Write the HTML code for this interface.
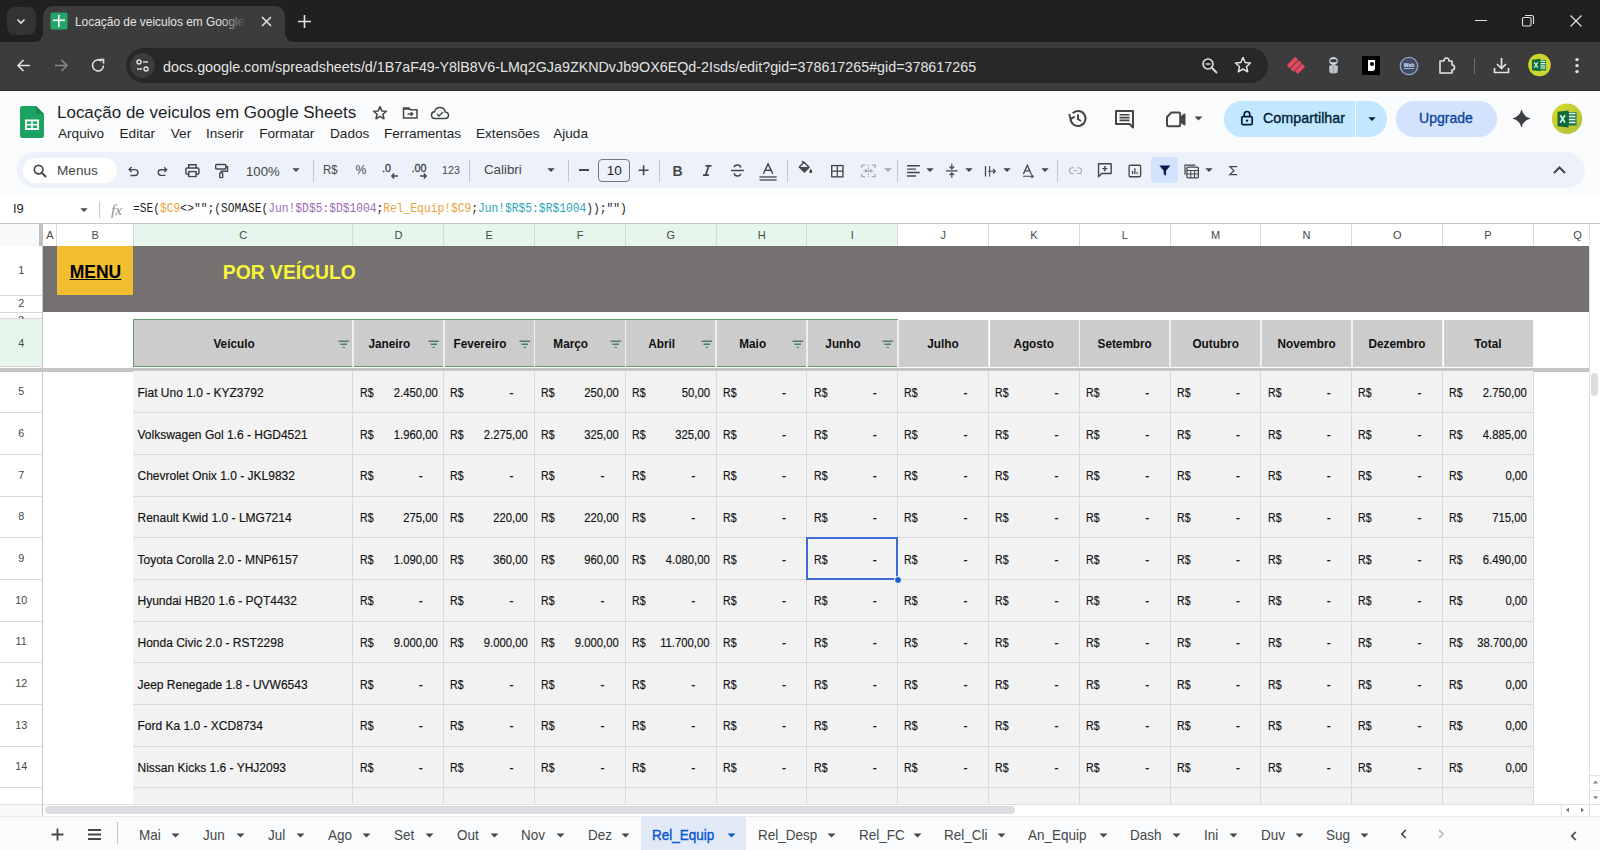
<!DOCTYPE html><html><head><meta charset="utf-8"><style>
html,body{margin:0;padding:0;width:1600px;height:850px;overflow:hidden;background:#fff;position:relative}
.r{position:absolute;box-sizing:border-box}
.t{position:absolute;white-space:nowrap;line-height:normal}
</style></head><body>
<div class="r" style="left:0px;top:0px;width:1600px;height:42px;background:#202020;"></div>
<div class="r" style="left:0px;top:42px;width:1600px;height:48px;background:#3c3c3c;"></div>
<div class="r" style="left:7px;top:7px;width:29px;height:28px;background:#333333;border-radius:8px"></div>
<svg class="r" style="left:14px;top:14px;" width="14" height="14" viewBox="0 0 14 14"><path d="M3.5 5.5 L7 9 L10.5 5.5" stroke="#e3e3e3" stroke-width="1.6" fill="none"/></svg>
<div class="r" style="left:43px;top:6px;width:242px;height:37px;background:#3c3c3c;border-radius:10px 10px 0 0"></div>
<svg class="r" style="left:33px;top:32px;" width="10" height="10" viewBox="0 0 10 10"><path d="M0 10 Q10 10 10 0 L10 10 Z" fill="#3c3c3c"/></svg>
<svg class="r" style="left:285px;top:32px;" width="10" height="10" viewBox="0 0 10 10"><path d="M10 10 Q0 10 0 0 L0 10 Z" fill="#3c3c3c"/></svg>
<svg class="r" style="left:50px;top:12px;" width="18" height="18" viewBox="0 0 18 18"><rect x="0.5" y="0.5" width="17" height="17" rx="2" fill="#23a566"/><rect x="8" y="3" width="1.6" height="12" fill="#fff"/><rect x="3" y="7.5" width="12" height="1.6" fill="#fff"/></svg>
<div class="r" style="left:75px;top:8px;width:175px;height:30px;overflow:hidden">
<div class="t" style="left:0px;top:6.42px;font-family:'Liberation Sans';font-size:12.8px;color:#e3e3e3;font-weight:normal;transform:scaleX(0.93);transform-origin:left 0;">Locação de veiculos em Google</div>
</div>
<div class="r" style="left:220px;top:8px;width:30px;height:30px;background:linear-gradient(to right, rgba(60,60,60,0), #3c3c3c 90%);"></div>
<svg class="r" style="left:260px;top:15px;" width="13" height="13" viewBox="0 0 13 13"><path d="M2 2 L11 11 M11 2 L2 11" stroke="#e3e3e3" stroke-width="1.5"/></svg>
<svg class="r" style="left:297px;top:14px;" width="15" height="15" viewBox="0 0 15 15"><path d="M7.5 1 V14 M1 7.5 H14" stroke="#e3e3e3" stroke-width="1.6"/></svg>
<div class="r" style="left:1475px;top:20px;width:12px;height:1px;background:#e3e3e3;"></div>
<svg class="r" style="left:1521px;top:14px;" width="14" height="14" viewBox="0 0 14 14"><rect x="1.5" y="3.5" width="8.5" height="8.5" rx="1.5" stroke="#e3e3e3" stroke-width="1.1" fill="none"/><path d="M4 1.5 H10.5 Q12.5 1.5 12.5 3.5 V10" stroke="#e3e3e3" stroke-width="1.1" fill="none"/></svg>
<svg class="r" style="left:1569px;top:14px;" width="14" height="14" viewBox="0 0 14 14"><path d="M1.5 1.5 L12.5 12.5 M12.5 1.5 L1.5 12.5" stroke="#e3e3e3" stroke-width="1.2"/></svg>
<svg class="r" style="left:15px;top:57px;" width="17" height="17" viewBox="0 0 17 17"><path d="M15 8.5 H3 M8.5 3 L3 8.5 L8.5 14" stroke="#e3e3e3" stroke-width="1.6" fill="none"/></svg>
<svg class="r" style="left:53px;top:57px;" width="17" height="17" viewBox="0 0 17 17"><path d="M2 8.5 H14 M8.5 3 L14 8.5 L8.5 14" stroke="#8a8a8a" stroke-width="1.6" fill="none"/></svg>
<svg class="r" style="left:90px;top:57px;" width="17" height="17" viewBox="0 0 17 17"><path d="M13.5 8.5 A5.5 5.5 0 1 1 11.5 4.2" stroke="#e3e3e3" stroke-width="1.6" fill="none"/><path d="M9.5 2.5 L13.5 2.5 L13.5 6.5" stroke="#e3e3e3" stroke-width="1.6" fill="none"/></svg>
<div class="r" style="left:126px;top:48px;width:1142px;height:35px;background:#282828;border-radius:18px"></div>
<div class="r" style="left:130px;top:53px;width:25px;height:25px;background:#3c3c3c;border-radius:50%"></div>
<svg class="r" style="left:135px;top:58px;" width="15" height="15" viewBox="0 0 15 15"><circle cx="4" cy="4" r="2" stroke="#e3e3e3" stroke-width="1.4" fill="none"/><path d="M8 4 H13" stroke="#e3e3e3" stroke-width="1.4"/><circle cx="11" cy="11" r="2" stroke="#e3e3e3" stroke-width="1.4" fill="none"/><path d="M2 11 H7" stroke="#e3e3e3" stroke-width="1.4"/></svg>
<div class="t" style="left:163px;top:59.06px;font-family:'Liberation Sans';font-size:14.3px;color:#e3e3e3;font-weight:normal;">docs.google.com/spreadsheets/d/1B7aF49-Y8lB8V6-LMq2GJa9ZKNDvJb9OX6EQd-2Isds/edit?gid=378617265#gid=378617265</div>
<svg class="r" style="left:1201px;top:57px;" width="18" height="18" viewBox="0 0 18 18"><circle cx="7" cy="7" r="5" stroke="#e3e3e3" stroke-width="1.6" fill="none"/><path d="M11 11 L16 16" stroke="#e3e3e3" stroke-width="1.8"/><path d="M4.5 7 H9.5" stroke="#e3e3e3" stroke-width="1.4"/></svg>
<svg class="r" style="left:1234px;top:56px;" width="18" height="18" viewBox="0 0 18 18"><path d="M9 1.5 L11.2 6.5 L16.5 7 L12.5 10.5 L13.7 15.8 L9 13 L4.3 15.8 L5.5 10.5 L1.5 7 L6.8 6.5 Z" stroke="#e3e3e3" stroke-width="1.5" fill="none" stroke-linejoin="round"/></svg>
<svg class="r" style="left:1284px;top:54px;" width="24" height="24" viewBox="0 0 24 24"><g transform="rotate(-45 12 12)" fill="#e24a5e"><rect x="6" y="5" width="12" height="4.2" rx="0.8"/><rect x="6" y="9.9" width="12" height="4.2" rx="0.8"/><rect x="7.5" y="14.8" width="10.5" height="4.2" rx="0.8"/></g></svg>
<svg class="r" style="left:1326px;top:56px;" width="15" height="19" viewBox="0 0 15 19"><ellipse cx="7.5" cy="5" rx="4.3" ry="4" fill="#d2d6da"/><rect x="4.3" y="3.3" width="6.4" height="3" rx="1.5" fill="#2c3a4a"/><path d="M3 10 Q7.5 8 12 10 L11.5 16.5 Q7.5 18.5 3.5 16.5 Z" fill="#bfc4c9"/><path d="M7.5 10 V17" stroke="#8f959b" stroke-width="0.8"/></svg>
<div class="r" style="left:1362px;top:56px;width:18px;height:19px;background:#000;"></div>
<svg class="r" style="left:1364px;top:58px;" width="14" height="15" viewBox="0 0 14 15"><path d="M4 2 H11 V10 Q11 13 8 13 H4 Z" fill="#fff"/><circle cx="8" cy="6" r="2" fill="#000"/></svg>
<svg class="r" style="left:1399px;top:56px;" width="20" height="20" viewBox="0 0 20 20"><circle cx="10" cy="10" r="8.7" fill="#3f4c6b" stroke="#9aa6bd" stroke-width="1.3"/><text x="10" y="10.5" font-size="5" text-anchor="middle" font-family="Liberation Sans" font-weight="bold" fill="#e8ecf5">Web</text><path d="M5 12.5 H15" stroke="#c9d1e0" stroke-width="0.8"/></svg>
<svg class="r" style="left:1437px;top:56px;" width="19" height="19" viewBox="0 0 19 19"><path d="M3 5 H7 Q7 2 9.5 2 Q12 2 12 5 H15 V9 Q17.5 9 17.5 11.5 Q17.5 14 15 14 V17 H3 Z" stroke="#e3e3e3" stroke-width="1.6" fill="none" stroke-linejoin="round"/></svg>
<div class="r" style="left:1474px;top:58px;width:1px;height:16px;background:#6b6b6b;"></div>
<svg class="r" style="left:1492px;top:56px;" width="19" height="19" viewBox="0 0 19 19"><path d="M9.5 2 V12 M5 8 L9.5 12.5 L14 8" stroke="#e3e3e3" stroke-width="1.7" fill="none"/><path d="M2.5 12 V16.5 H16.5 V12" stroke="#e3e3e3" stroke-width="1.7" fill="none"/></svg>
<svg class="r" style="left:1527px;top:53px;" width="25" height="24" viewBox="0 0 25 24"><circle cx="12.5" cy="12" r="11.3" fill="#cdd52e"/><rect x="12.5" y="7" width="6.5" height="10.5" fill="#1d7a45"/><path d="M13.3 8.3 H18.3 M13.3 10.6 H18.3 M13.3 12.9 H18.3 M13.3 15.2 H18.3" stroke="#e6f3ea" stroke-width="1.2"/><path d="M5 6.8 L13.3 5.7 V18.3 L5 17.2 Z" fill="#0e6b3b"/><path d="M7.2 9.4 L10.8 14.6 M10.8 9.4 L7.2 14.6" stroke="#d9f0e1" stroke-width="1.3"/></svg>
<svg class="r" style="left:1571px;top:55px;" width="12" height="22" viewBox="0 0 12 22"><circle cx="6" cy="4.6" r="1.7" fill="#e3e3e3"/><circle cx="6" cy="10.6" r="1.7" fill="#e3e3e3"/><circle cx="6" cy="16.6" r="1.7" fill="#e3e3e3"/></svg>
<div class="r" style="left:0px;top:90px;width:1600px;height:133px;background:#f9fbfd;"></div>
<div class="r" style="left:0px;top:89.5px;width:1600px;height:1px;background:#2c2c2c;"></div>
<div class="r" style="left:0px;top:90.5px;width:1600px;height:1px;background:#ffffff;"></div>
<svg class="r" style="left:20px;top:106px;" width="24" height="32" viewBox="0 0 24 32"><path d="M2.5 0 H16 L24 8 V29.5 Q24 32 21.5 32 H2.5 Q0 32 0 29.5 V2.5 Q0 0 2.5 0 Z" fill="#1ea362"/><path d="M16 0 L24 8 H18 Q16 8 16 6 Z" fill="#188a52"/><rect x="5" y="13.5" width="14" height="10.5" fill="#fff"/><rect x="6.8" y="15.3" width="4.4" height="2.6" fill="#1ea362"/><rect x="12.8" y="15.3" width="4.4" height="2.6" fill="#1ea362"/><rect x="6.8" y="19.5" width="4.4" height="2.6" fill="#1ea362"/><rect x="12.8" y="19.5" width="4.4" height="2.6" fill="#1ea362"/></svg>
<div class="t" style="left:56.5px;top:103.01px;font-family:'Liberation Sans';font-size:16.9px;color:#1f1f1f;font-weight:normal;transform:scaleX(1.005);transform-origin:left 0;">Locação de veiculos em Google Sheets</div>
<svg class="r" style="left:371px;top:103.5px;" width="18" height="18" viewBox="0 0 18 18"><path d="M9 2.6 L10.8 6.9 L15.4 7.3 L11.9 10.3 L13 14.8 L9 12.4 L5 14.8 L6.1 10.3 L2.6 7.3 L7.2 6.9 Z" stroke="#444746" stroke-width="1.5" fill="none" stroke-linejoin="round"/></svg>
<svg class="r" style="left:401px;top:104px;" width="18" height="18" viewBox="0 0 18 18"><path d="M2.5 4 V14 H16 V5.8 H9.5 L8 4 Z" stroke="#444746" stroke-width="1.5" fill="none" stroke-linejoin="round"/><path d="M2.5 4 H8 L9.5 5.8 H2.5 Z" fill="#444746"/><path d="M6.5 10 H11.5 M9.8 8.2 L11.6 10 L9.8 11.8" stroke="#444746" stroke-width="1.5" fill="none"/></svg>
<svg class="r" style="left:430px;top:104px;" width="20" height="18" viewBox="0 0 20 18"><path d="M5 14.5 Q1.5 14.5 1.5 11 Q1.5 8 4.5 7.8 Q5.5 3.5 10 3.5 Q14.5 3.5 15.3 8 Q18.5 8.3 18.5 11.3 Q18.5 14.5 15 14.5 Z" stroke="#444746" stroke-width="1.5" fill="none"/><path d="M7 10 L9 12 L13 8" stroke="#444746" stroke-width="1.4" fill="none"/></svg>
<div class="t" style="left:58px;top:126.19px;font-family:'Liberation Sans';font-size:13.6px;color:#1f1f1f;font-weight:normal;">Arquivo</div>
<div class="t" style="left:119.5px;top:126.19px;font-family:'Liberation Sans';font-size:13.6px;color:#1f1f1f;font-weight:normal;">Editar</div>
<div class="t" style="left:170.8px;top:126.19px;font-family:'Liberation Sans';font-size:13.6px;color:#1f1f1f;font-weight:normal;">Ver</div>
<div class="t" style="left:206px;top:126.19px;font-family:'Liberation Sans';font-size:13.6px;color:#1f1f1f;font-weight:normal;">Inserir</div>
<div class="t" style="left:259.2px;top:126.19px;font-family:'Liberation Sans';font-size:13.6px;color:#1f1f1f;font-weight:normal;">Formatar</div>
<div class="t" style="left:330px;top:126.19px;font-family:'Liberation Sans';font-size:13.6px;color:#1f1f1f;font-weight:normal;">Dados</div>
<div class="t" style="left:384px;top:126.19px;font-family:'Liberation Sans';font-size:13.6px;color:#1f1f1f;font-weight:normal;">Ferramentas</div>
<div class="t" style="left:476px;top:126.19px;font-family:'Liberation Sans';font-size:13.6px;color:#1f1f1f;font-weight:normal;">Extensões</div>
<div class="t" style="left:553.2px;top:126.19px;font-family:'Liberation Sans';font-size:13.6px;color:#1f1f1f;font-weight:normal;">Ajuda</div>
<svg class="r" style="left:1066px;top:107px;" width="23" height="23" viewBox="0 0 23 23"><path d="M4.5 11.5 A7.5 7.5 0 1 0 6.7 6.2" stroke="#444746" stroke-width="2" fill="none"/><path d="M2.5 5.5 L4.5 11.5 L9.5 9" stroke="#444746" stroke-width="0" fill="none"/><path d="M3.2 7 L4.6 11.8 L8.8 9.6" stroke="#444746" stroke-width="1.9" fill="none" stroke-linejoin="round"/><path d="M12 7.5 V12 L15 14" stroke="#444746" stroke-width="2" fill="none"/></svg>
<svg class="r" style="left:1113px;top:108px;" width="23" height="23" viewBox="0 0 23 23"><path d="M3 3 H20 V19.5 L16.5 16 H3 Z" stroke="#444746" stroke-width="2" fill="none" stroke-linejoin="round"/><path d="M6.5 6.8 H16.5 M6.5 9.6 H16.5 M6.5 12.4 H16.5" stroke="#444746" stroke-width="1.6"/></svg>
<svg class="r" style="left:1164px;top:109px;" width="24" height="20" viewBox="0 0 24 20"><path d="M3 8 L7.5 3.5 H15 Q16.2 3.5 16.2 4.7 V16.2 Q16.2 17.2 15 17.2 H4.2 Q3 17.2 3 16 Z" stroke="#444746" stroke-width="2" fill="none" stroke-linejoin="round"/><path d="M16.2 9 L20.5 5.5 V15.5 L16.2 12" stroke="#444746" stroke-width="2" fill="#444746" stroke-linejoin="round"/></svg>
<svg class="r" style="left:1194px;top:116px;" width="9" height="6" viewBox="0 0 9 6"><path d="M0.5 0.5 H8.5 L4.5 4.5 Z" fill="#444746"/></svg>
<div class="r" style="left:1223.5px;top:100.5px;width:163.5px;height:36.5px;background:#c2e7ff;border-radius:18px"></div>
<div class="r" style="left:1355px;top:100.5px;width:1px;height:36.5px;background:#f9fbfd;"></div>
<svg class="r" style="left:1240px;top:110px;" width="14" height="16" viewBox="0 0 14 16"><rect x="1.8" y="6.6" width="10.4" height="8" rx="1.2" stroke="#001d35" stroke-width="1.7" fill="none"/><path d="M4.2 6.6 V4.5 Q4.2 1.5 7 1.5 Q9.8 1.5 9.8 4.5 V6.6" stroke="#001d35" stroke-width="1.7" fill="none"/><circle cx="7" cy="10.6" r="1.2" fill="#001d35"/></svg>
<div class="t" style="left:1263px;top:110.35px;font-family:'Liberation Sans';font-size:14.2px;color:#001d35;font-weight:normal;transform:scaleX(1.01);transform-origin:left 0;-webkit-text-stroke:0.35px #001d35">Compartilhar</div>
<svg class="r" style="left:1367.5px;top:117px;" width="8" height="5" viewBox="0 0 8 5"><path d="M0.3 0.3 H7.7 L4 4 Z" fill="#001d35"/></svg>
<div class="r" style="left:1395.5px;top:100.5px;width:101.5px;height:36.5px;background:#d3e3fd;border-radius:18px"></div>
<div class="t" style="left:1419px;top:110.35px;font-family:'Liberation Sans';font-size:14.2px;color:#0842a0;font-weight:normal;transform:scaleX(0.99);transform-origin:left 0;-webkit-text-stroke:0.3px #0842a0">Upgrade</div>
<svg class="r" style="left:1511px;top:108px;" width="21" height="21" viewBox="0 0 21 21"><path d="M10.5 1.3 Q12.2 8.8 19.7 10.5 Q12.2 12.2 10.5 19.7 Q8.8 12.2 1.3 10.5 Q8.8 8.8 10.5 1.3 Z" fill="#3c3f43"/></svg>
<svg class="r" style="left:1551px;top:103px;" width="32" height="32" viewBox="0 0 32 32"><defs><linearGradient id="yg" x1="0" y1="0" x2="1" y2="1"><stop offset="0" stop-color="#d8dc2a"/><stop offset="1" stop-color="#aebc3a"/></linearGradient></defs><circle cx="16" cy="15.75" r="15.2" fill="url(#yg)"/><rect x="17" y="9" width="8.5" height="13.6" fill="#1d7a45"/><path d="M18 10.5 H24.5 M18 13.5 H24.5 M18 16.5 H24.5 M18 19.5 H24.5" stroke="#e6f3ea" stroke-width="1.7"/><path d="M6.5 8.8 L17.5 7.4 V24.6 L6.5 23.2 Z" fill="#0e6b3b"/><path d="M9.3 12.2 L14 19.6 M14 12.2 L9.3 19.6" stroke="#d9f0e1" stroke-width="1.7"/></svg>
<div class="r" style="left:16.5px;top:152px;width:1568.5px;height:36px;background:#edf2fa;border-radius:18px"></div>
<div class="r" style="left:23px;top:157.5px;width:94px;height:25.5px;background:#ffffff;border-radius:13px"></div>
<svg class="r" style="left:32px;top:163px;" width="16" height="16" viewBox="0 0 16 16"><circle cx="6.6" cy="6.6" r="4.3" stroke="#444746" stroke-width="1.7" fill="none"/><path d="M9.7 9.7 L14 14" stroke="#444746" stroke-width="1.9"/></svg>
<div class="t" style="left:57px;top:163.19px;font-family:'Liberation Sans';font-size:13.6px;color:#444746;font-weight:normal;">Menus</div>
<svg class="r" style="left:125px;top:163px;transform:translate(-0.20px,-0.22px) scale(0.838);" width="17" height="17" viewBox="0 0 17 17"><path d="M4 6.5 H10.5 Q14 6.5 14 10 Q14 13.5 10.5 13.5 H5" stroke="#444746" stroke-width="1.7" fill="none"/><path d="M6.5 3.5 L3.5 6.5 L6.5 9.5" stroke="#444746" stroke-width="1.7" fill="none"/></svg>
<svg class="r" style="left:154px;top:163px;transform:translate(0.15px,-0.20px) scale(0.804);" width="17" height="17" viewBox="0 0 17 17"><path d="M13 6.5 H6.5 Q3 6.5 3 10 Q3 13.5 6.5 13.5 H12" stroke="#444746" stroke-width="1.7" fill="none"/><path d="M10.5 3.5 L13.5 6.5 L10.5 9.5" stroke="#444746" stroke-width="1.7" fill="none"/></svg>
<svg class="r" style="left:184px;top:163px;transform:translate(-0.12px,-0.75px) scale(0.910);" width="17" height="16" viewBox="0 0 17 16"><path d="M4.5 5.5 V2 H12.5 V5.5" stroke="#444746" stroke-width="1.6" fill="none"/><rect x="1.3" y="5.5" width="14.4" height="6.8" rx="1.6" stroke="#444746" stroke-width="1.6" fill="none"/><rect x="4.5" y="9.5" width="8" height="5.5" stroke="#444746" stroke-width="1.6" fill="#edf2fa"/></svg>
<svg class="r" style="left:213px;top:162px;transform:translate(-0.38px,-0.72px) scale(0.847);" width="18" height="19" viewBox="0 0 18 19"><rect x="2" y="2" width="12" height="5.5" rx="1" stroke="#444746" stroke-width="1.7" fill="none"/><path d="M14 4.8 H16 V10 H8.5 V12" stroke="#444746" stroke-width="1.6" fill="none"/><rect x="6.8" y="12" width="3.5" height="5.5" rx="0.5" stroke="#444746" stroke-width="1.6" fill="none"/></svg>
<div class="t" style="left:246px;top:164.19px;font-family:'Liberation Sans';font-size:13.6px;color:#444746;font-weight:normal;transform:scaleX(0.97);transform-origin:left 0;">100%</div>
<svg class="r" style="left:292px;top:168px;" width="8" height="5" viewBox="0 0 8 5"><path d="M0.3 0.3 H7.7 L4 4 Z" fill="#444746"/></svg>
<div class="r" style="left:313px;top:160px;width:1px;height:22px;background:#c7c7c7;"></div>
<div class="t" style="left:323px;top:162.76px;font-family:'Liberation Sans';font-size:12.2px;color:#444746;font-weight:normal;transform:scaleX(0.93);transform-origin:left 0;">R$</div>
<div class="t" style="left:355.5px;top:162.76px;font-family:'Liberation Sans';font-size:12.2px;color:#444746;font-weight:normal;">%</div>
<div class="t" style="left:382px;top:162.03px;font-family:'Liberation Sans';font-size:10.8px;color:#444746;font-weight:normal;transform:scaleX(1.0);transform-origin:left 0;-webkit-text-stroke:0.35px #444746">.0</div>
<svg class="r" style="left:390px;top:172px;" width="9" height="8" viewBox="0 0 9 8"><path d="M8 4 H1.8 M4.2 1.6 L1.8 4 L4.2 6.4" stroke="#444746" stroke-width="1.4" fill="none"/></svg>
<div class="t" style="left:411.5px;top:162.03px;font-family:'Liberation Sans';font-size:10.8px;color:#444746;font-weight:normal;transform:scaleX(1.0);transform-origin:left 0;-webkit-text-stroke:0.35px #444746">.00</div>
<svg class="r" style="left:419px;top:171.5px;" width="9" height="8" viewBox="0 0 9 8"><path d="M1 4 H7.2 M4.8 1.6 L7.2 4 L4.8 6.4" stroke="#444746" stroke-width="1.4" fill="none"/></svg>
<div class="t" style="left:442.3px;top:163.59px;font-family:'Liberation Sans';font-size:11.5px;color:#444746;font-weight:normal;transform:scaleX(0.93);transform-origin:left 0;">123</div>
<div class="r" style="left:469px;top:160px;width:1px;height:22px;background:#c7c7c7;"></div>
<div class="t" style="left:484.3px;top:161.89px;font-family:'Liberation Sans';font-size:13.6px;color:#444746;font-weight:normal;transform:scaleX(0.98);transform-origin:left 0;">Calibri</div>
<svg class="r" style="left:547px;top:168px;" width="8" height="5" viewBox="0 0 8 5"><path d="M0.3 0.3 H7.7 L4 4 Z" fill="#444746"/></svg>
<div class="r" style="left:568px;top:160px;width:1px;height:22px;background:#c7c7c7;"></div>
<div class="r" style="left:579px;top:169.3px;width:9.6px;height:1.6px;background:#444746;"></div>
<div class="r" style="left:598.3px;top:159.2px;width:31.5px;height:22.4px;background:transparent;border:1px solid #747775;border-radius:4px"></div>
<div class="t" style="left:614.3px;width:0;display:flex;justify-content:center;top:162.89px;"><span style="white-space:nowrap;font-family:'Liberation Sans';font-size:13.6px;color:#1f1f1f;font-weight:normal;display:inline-block">10</span></div>
<svg class="r" style="left:636px;top:163px;transform:translate(0.10px,-0.30px) scale(0.909);" width="15" height="15" viewBox="0 0 15 15"><path d="M7.5 2 V13 M2 7.5 H13" stroke="#444746" stroke-width="1.8"/></svg>
<div class="r" style="left:659px;top:160px;width:1px;height:22px;background:#c7c7c7;"></div>
<div class="t" style="left:672.5px;top:163.33px;font-family:'Liberation Sans';font-size:14px;color:#444746;font-weight:bold;">B</div>
<svg class="r" style="left:699px;top:163px;transform:translate(0.20px,-0.50px) scale(0.843);" width="16" height="16" viewBox="0 0 16 16"><path d="M6 2.5 H13 M3 13.5 H10 M9.8 2.5 L6.2 13.5" stroke="#444746" stroke-width="2" fill="none"/></svg>
<svg class="r" style="left:728px;top:162px;transform:translate(0.45px,-0.50px) scale(0.911);" width="18" height="18" viewBox="0 0 18 18"><path d="M2 9 H16" stroke="#444746" stroke-width="1.6"/><path d="M12.5 6 Q12.5 3 9 3 Q5.5 3 5.5 5.5" stroke="#444746" stroke-width="1.6" fill="none"/><path d="M5.5 12 Q5.5 15 9 15 Q12.5 15 12.5 12.5" stroke="#444746" stroke-width="1.6" fill="none"/></svg>
<svg class="r" style="left:756px;top:159px;transform:translate(1.08px,1.03px) scale(0.859);" width="22" height="24" viewBox="0 0 22 24"><path d="M5.5 14 L11 2.5 L16.5 14 M7.5 10 H14.5" stroke="#444746" stroke-width="1.7" fill="none"/><rect x="1" y="17" width="20" height="1.5" fill="#444746"/><rect x="1" y="20.5" width="20" height="1.5" fill="#444746"/></svg>
<div class="r" style="left:787px;top:160px;width:1px;height:22px;background:#c7c7c7;"></div>
<svg class="r" style="left:796px;top:161px;transform:translate(-0.23px,-2.30px) scale(0.852);" width="19" height="19" viewBox="0 0 19 19"><path d="M2.5 8 L8 2.5 L14 8.5 L8.5 14 Z" stroke="#444746" stroke-width="1.7" fill="none" stroke-linejoin="round"/><path d="M2.5 8.2 H13.8 L8.5 14 Z" fill="#444746"/><path d="M5.5 1 L8 3.5" stroke="#444746" stroke-width="1.7"/><path d="M16 10 Q17.8 12.5 17.8 13.5 A1.8 1.8 0 0 1 14.2 13.5 Q14.2 12.5 16 10 Z" fill="#444746"/></svg>
<svg class="r" style="left:828px;top:162px;transform:translate(-0.17px,-0.30px) scale(0.751);" width="19" height="19" viewBox="0 0 19 19"><rect x="2" y="2" width="15" height="15" stroke="#444746" stroke-width="1.8" fill="none"/><path d="M9.5 2 V17 M2 9.5 H17" stroke="#444746" stroke-width="1.6"/></svg>
<svg class="r" style="left:858px;top:162px;transform:translate(0.40px,-0.65px) scale(0.826);" width="20" height="19" viewBox="0 0 20 19"><path d="M2 2.5 V6 M2 13 V16.5 H6 M6 2.5 H2 M14 2.5 H18 V6 M18 13 V16.5 H14" stroke="#a8abad" stroke-width="1.6" fill="none"/><path d="M4 9.5 H8.5 M6.5 7.5 L8.5 9.5 L6.5 11.5 M16 9.5 H11.5 M13.5 7.5 L11.5 9.5 L13.5 11.5" stroke="#a8abad" stroke-width="1.5" fill="none"/><path d="M10 2 V17" stroke="#a8abad" stroke-width="1.4" stroke-dasharray="2 1.5"/></svg>
<svg class="r" style="left:884px;top:168px;" width="8" height="5" viewBox="0 0 8 5"><path d="M0.3 0.3 H7.7 L4 4 Z" fill="#a8abad"/></svg>
<div class="r" style="left:897px;top:160px;width:1px;height:22px;background:#c7c7c7;"></div>
<svg class="r" style="left:904px;top:162px;transform:translate(0.45px,0.25px) scale(0.848);" width="18" height="18" viewBox="0 0 18 18"><path d="M1.5 2.5 H16.5 M1.5 6.5 H12 M1.5 10.5 H16.5 M1.5 14.5 H12" stroke="#444746" stroke-width="1.7"/></svg>
<svg class="r" style="left:926px;top:168px;" width="8" height="5" viewBox="0 0 8 5"><path d="M0.3 0.3 H7.7 L4 4 Z" fill="#444746"/></svg>
<svg class="r" style="left:943px;top:161px;transform:translate(-0.20px,-0.18px) scale(0.775);" width="18" height="20" viewBox="0 0 18 20"><path d="M1.5 10 H16.5" stroke="#444746" stroke-width="1.7"/><path d="M9 1 V7.5 M6 4.5 L9 7.5 L12 4.5 M9 19 V12.5 M6 15.5 L9 12.5 L12 15.5" stroke="#444746" stroke-width="1.6" fill="none"/></svg>
<svg class="r" style="left:965px;top:168px;" width="8" height="5" viewBox="0 0 8 5"><path d="M0.3 0.3 H7.7 L4 4 Z" fill="#444746"/></svg>
<svg class="r" style="left:981px;top:162px;transform:translate(0.75px,0.25px) scale(0.750);" width="18" height="18" viewBox="0 0 18 18"><path d="M2 2 V16" stroke="#444746" stroke-width="1.7"/><path d="M7.5 2 V16" stroke="#444746" stroke-width="1.5"/><path d="M5.5 9 H15 M12 6 L15 9 L12 12" stroke="#444746" stroke-width="1.6" fill="none"/></svg>
<svg class="r" style="left:1003px;top:168px;" width="8" height="5" viewBox="0 0 8 5"><path d="M0.3 0.3 H7.7 L4 4 Z" fill="#444746"/></svg>
<svg class="r" style="left:1019px;top:161px;transform:translate(0.39px,0.31px) scale(0.780);" width="19" height="19" viewBox="0 0 19 19"><path d="M2.5 13.5 L7.5 2.5 L12.5 13.5 M4.3 9.5 H10.7" stroke="#444746" stroke-width="1.7" fill="none"/><path d="M2 16.5 H15 M12.5 14 L15 16.5 L12.5 19" stroke="#444746" stroke-width="1.5" fill="none"/></svg>
<svg class="r" style="left:1041px;top:168px;" width="8" height="5" viewBox="0 0 8 5"><path d="M0.3 0.3 H7.7 L4 4 Z" fill="#444746"/></svg>
<div class="r" style="left:1057px;top:160px;width:1px;height:22px;background:#c7c7c7;"></div>
<svg class="r" style="left:1064px;top:163px;transform:translate(0.95px,0.20px) scale(0.640);" width="21" height="15" viewBox="0 0 21 15"><path d="M8 3 H5.5 A4.5 4.5 0 0 0 5.5 12 H8 M13 3 H15.5 A4.5 4.5 0 0 1 15.5 12 H13 M7 7.5 H14" stroke="#a8abad" stroke-width="1.7" fill="none"/></svg>
<svg class="r" style="left:1095px;top:161px;transform:translate(-0.15px,-0.99px) scale(0.788);" width="20" height="20" viewBox="0 0 20 20"><path d="M2 2 H18 V14.5 H6 L2 18.5 Z" stroke="#444746" stroke-width="1.8" fill="none" stroke-linejoin="round"/><path d="M10 5 V11.5 M6.8 8.2 H13.2" stroke="#444746" stroke-width="1.8"/></svg>
<svg class="r" style="left:1125px;top:162px;transform:translate(0.35px,-0.50px) scale(0.768);" width="19" height="19" viewBox="0 0 19 19"><rect x="2" y="2" width="15" height="15" rx="1.5" stroke="#444746" stroke-width="1.7" fill="none"/><path d="M6.5 9.5 V13.5 M9.5 6 V13.5 M12.5 11 V13.5" stroke="#444746" stroke-width="1.7"/></svg>
<div class="r" style="left:1151px;top:157px;width:27px;height:26px;background:#d3e3fd;border-radius:4px"></div>
<svg class="r" style="left:1156px;top:163px;transform:translate(0.35px,-0.35px) scale(0.792);" width="17" height="16" viewBox="0 0 17 16"><path d="M1.5 1.5 H15.5 L10 8 V14.5 L7 12.5 V8 Z" fill="#041e49"/></svg>
<svg class="r" style="left:1181px;top:161px;transform:translate(0.26px,-0.20px) scale(0.764);" width="22" height="21" viewBox="0 0 22 21"><rect x="4" y="5" width="15" height="14" rx="1.5" stroke="#444746" stroke-width="1.7" fill="none"/><path d="M1.5 15 V2.5 H15" stroke="#444746" stroke-width="1.6" fill="none"/><path d="M4 9.5 H19 M4 14 H19 M9 9.5 V19 M14 9.5 V19" stroke="#444746" stroke-width="1.4"/></svg>
<svg class="r" style="left:1205px;top:168px;" width="8" height="5" viewBox="0 0 8 5"><path d="M0.3 0.3 H7.7 L4 4 Z" fill="#444746"/></svg>
<svg class="r" style="left:1225px;top:163px;transform:translate(1.03px,-0.35px) scale(0.727);" width="15" height="16" viewBox="0 0 15 16"><path d="M12.5 2.5 H2.5 L8 8 L2.5 13.5 H12.5" stroke="#444746" stroke-width="1.8" fill="none"/></svg>
<svg class="r" style="left:1552px;top:165px;" width="15" height="10" viewBox="0 0 15 10"><path d="M2 8 L7.5 2.5 L13 8" stroke="#444746" stroke-width="2" fill="none"/></svg>
<div class="r" style="left:0px;top:196px;width:1600px;height:27px;background:#ffffff;"></div>
<div class="t" style="left:13px;top:201.24px;font-family:'Liberation Sans';font-size:13px;color:#1f1f1f;font-weight:normal;">I9</div>
<svg class="r" style="left:80px;top:208px;" width="8" height="5" viewBox="0 0 8 5"><path d="M0.3 0.3 H7.7 L4 4 Z" fill="#444746"/></svg>
<div class="r" style="left:99px;top:202px;width:1px;height:16px;background:#c7c7c7;"></div>
<div class="t" style="left:111px;top:200.69px;font-family:'Liberation Serif';font-size:15.5px;color:#8c8f92;font-weight:normal;transform:scaleX(1.0);transform-origin:left 0;"><i>fx</i></div>
<div class="t" style="left:132.8px;top:202.20px;font-family:'Liberation Mono';font-size:12.6px;color:#1f1f1f;font-weight:normal;transform:scaleX(0.895);transform-origin:left 0;"><span style="color:#1f1f1f">=SE(</span><span style="color:#e9a23b">$C9</span><span style="color:#1f1f1f">&lt;&gt;"";(SOMASE(</span><span style="color:#9a6ab5">Jun!$D$5:$D$1004</span><span style="color:#1f1f1f">;</span><span style="color:#e9a23b">Rel_Equip!$C9</span><span style="color:#1f1f1f">;</span><span style="color:#2aa5b9">Jun!$R$5:$R$1004</span><span style="color:#1f1f1f">));"")</span></div>
<div class="r" style="left:0px;top:223px;width:1600px;height:1px;background:#c7c7c7;"></div>
<div class="r" style="left:0px;top:224px;width:39px;height:22px;background:#f8f9fa;"></div>
<div class="r" style="left:39px;top:224px;width:4px;height:22px;background:#c0c0c0;"></div>
<div class="r" style="left:43px;top:224px;width:14px;height:22px;background:#ffffff;"></div>
<div class="r" style="left:57px;top:224px;width:76.19999999999999px;height:22px;background:#ffffff;"></div>
<div class="r" style="left:133.2px;top:224px;width:219.8px;height:22px;background:#e6f6ec;"></div>
<div class="r" style="left:353.0px;top:224px;width:90.80000000000001px;height:22px;background:#e6f6ec;"></div>
<div class="r" style="left:443.8px;top:224px;width:90.80000000000001px;height:22px;background:#e6f6ec;"></div>
<div class="r" style="left:534.6px;top:224px;width:90.79999999999995px;height:22px;background:#e6f6ec;"></div>
<div class="r" style="left:625.4px;top:224px;width:90.79999999999995px;height:22px;background:#e6f6ec;"></div>
<div class="r" style="left:716.2px;top:224px;width:90.79999999999995px;height:22px;background:#e6f6ec;"></div>
<div class="r" style="left:807.0px;top:224px;width:90.79999999999995px;height:22px;background:#e6f6ec;"></div>
<div class="r" style="left:897.8px;top:224px;width:90.79999999999995px;height:22px;background:#ffffff;"></div>
<div class="r" style="left:988.6px;top:224px;width:90.80000000000007px;height:22px;background:#ffffff;"></div>
<div class="r" style="left:1079.4px;top:224px;width:90.79999999999995px;height:22px;background:#ffffff;"></div>
<div class="r" style="left:1170.1999999999998px;top:224px;width:90.79999999999995px;height:22px;background:#ffffff;"></div>
<div class="r" style="left:1261.0px;top:224px;width:90.79999999999995px;height:22px;background:#ffffff;"></div>
<div class="r" style="left:1351.8px;top:224px;width:90.79999999999995px;height:22px;background:#ffffff;"></div>
<div class="r" style="left:1442.6px;top:224px;width:90.79999999999995px;height:22px;background:#ffffff;"></div>
<div class="r" style="left:1533.4px;top:224px;width:56.09999999999991px;height:22px;background:#ffffff;"></div>
<div class="r" style="left:56px;top:224px;width:1px;height:22px;background:#d6d8db;"></div>
<div class="t" style="left:50.0px;width:0;display:flex;justify-content:center;top:228.84px;"><span style="white-space:nowrap;font-family:'Liberation Sans';font-size:11px;color:#444746;font-weight:normal;display:inline-block">A</span></div>
<div class="r" style="left:133px;top:224px;width:1px;height:22px;background:#d6d8db;"></div>
<div class="t" style="left:95.1px;width:0;display:flex;justify-content:center;top:228.84px;"><span style="white-space:nowrap;font-family:'Liberation Sans';font-size:11px;color:#444746;font-weight:normal;display:inline-block">B</span></div>
<div class="r" style="left:352px;top:224px;width:1px;height:22px;background:#d6d8db;"></div>
<div class="t" style="left:243.1px;width:0;display:flex;justify-content:center;top:228.84px;"><span style="white-space:nowrap;font-family:'Liberation Sans';font-size:11px;color:#444746;font-weight:normal;display:inline-block">C</span></div>
<div class="r" style="left:443px;top:224px;width:1px;height:22px;background:#d6d8db;"></div>
<div class="t" style="left:398.4px;width:0;display:flex;justify-content:center;top:228.84px;"><span style="white-space:nowrap;font-family:'Liberation Sans';font-size:11px;color:#444746;font-weight:normal;display:inline-block">D</span></div>
<div class="r" style="left:534px;top:224px;width:1px;height:22px;background:#d6d8db;"></div>
<div class="t" style="left:489.20000000000005px;width:0;display:flex;justify-content:center;top:228.84px;"><span style="white-space:nowrap;font-family:'Liberation Sans';font-size:11px;color:#444746;font-weight:normal;display:inline-block">E</span></div>
<div class="r" style="left:625px;top:224px;width:1px;height:22px;background:#d6d8db;"></div>
<div class="t" style="left:580.0px;width:0;display:flex;justify-content:center;top:228.84px;"><span style="white-space:nowrap;font-family:'Liberation Sans';font-size:11px;color:#444746;font-weight:normal;display:inline-block">F</span></div>
<div class="r" style="left:716px;top:224px;width:1px;height:22px;background:#d6d8db;"></div>
<div class="t" style="left:670.8px;width:0;display:flex;justify-content:center;top:228.84px;"><span style="white-space:nowrap;font-family:'Liberation Sans';font-size:11px;color:#444746;font-weight:normal;display:inline-block">G</span></div>
<div class="r" style="left:806px;top:224px;width:1px;height:22px;background:#d6d8db;"></div>
<div class="t" style="left:761.6px;width:0;display:flex;justify-content:center;top:228.84px;"><span style="white-space:nowrap;font-family:'Liberation Sans';font-size:11px;color:#444746;font-weight:normal;display:inline-block">H</span></div>
<div class="r" style="left:897px;top:224px;width:1px;height:22px;background:#d6d8db;"></div>
<div class="t" style="left:852.4px;width:0;display:flex;justify-content:center;top:228.84px;"><span style="white-space:nowrap;font-family:'Liberation Sans';font-size:11px;color:#444746;font-weight:normal;display:inline-block">I</span></div>
<div class="r" style="left:988px;top:224px;width:1px;height:22px;background:#d6d8db;"></div>
<div class="t" style="left:943.1999999999999px;width:0;display:flex;justify-content:center;top:228.84px;"><span style="white-space:nowrap;font-family:'Liberation Sans';font-size:11px;color:#444746;font-weight:normal;display:inline-block">J</span></div>
<div class="r" style="left:1079px;top:224px;width:1px;height:22px;background:#d6d8db;"></div>
<div class="t" style="left:1034.0px;width:0;display:flex;justify-content:center;top:228.84px;"><span style="white-space:nowrap;font-family:'Liberation Sans';font-size:11px;color:#444746;font-weight:normal;display:inline-block">K</span></div>
<div class="r" style="left:1170px;top:224px;width:1px;height:22px;background:#d6d8db;"></div>
<div class="t" style="left:1124.8000000000002px;width:0;display:flex;justify-content:center;top:228.84px;"><span style="white-space:nowrap;font-family:'Liberation Sans';font-size:11px;color:#444746;font-weight:normal;display:inline-block">L</span></div>
<div class="r" style="left:1260px;top:224px;width:1px;height:22px;background:#d6d8db;"></div>
<div class="t" style="left:1215.6px;width:0;display:flex;justify-content:center;top:228.84px;"><span style="white-space:nowrap;font-family:'Liberation Sans';font-size:11px;color:#444746;font-weight:normal;display:inline-block">M</span></div>
<div class="r" style="left:1351px;top:224px;width:1px;height:22px;background:#d6d8db;"></div>
<div class="t" style="left:1306.4px;width:0;display:flex;justify-content:center;top:228.84px;"><span style="white-space:nowrap;font-family:'Liberation Sans';font-size:11px;color:#444746;font-weight:normal;display:inline-block">N</span></div>
<div class="r" style="left:1442px;top:224px;width:1px;height:22px;background:#d6d8db;"></div>
<div class="t" style="left:1397.1999999999998px;width:0;display:flex;justify-content:center;top:228.84px;"><span style="white-space:nowrap;font-family:'Liberation Sans';font-size:11px;color:#444746;font-weight:normal;display:inline-block">O</span></div>
<div class="r" style="left:1533px;top:224px;width:1px;height:22px;background:#d6d8db;"></div>
<div class="t" style="left:1488.0px;width:0;display:flex;justify-content:center;top:228.84px;"><span style="white-space:nowrap;font-family:'Liberation Sans';font-size:11px;color:#444746;font-weight:normal;display:inline-block">P</span></div>
<div class="r" style="left:1589px;top:224px;width:1px;height:22px;background:#d6d8db;"></div>
<div class="t" style="left:1577.5px;width:0;display:flex;justify-content:center;top:228.84px;"><span style="white-space:nowrap;font-family:'Liberation Sans';font-size:11px;color:#444746;font-weight:normal;display:inline-block">Q</span></div>
<div class="r" style="left:0px;top:246px;width:1589.5px;height:1px;background:#c7c7c7;"></div>
<div class="r" style="left:0px;top:247px;width:43px;height:557px;background:#ffffff;"></div>
<div class="r" style="left:0px;top:246px;width:42px;height:49.5px;background:#ffffff;"></div>
<div class="r" style="left:0px;top:295.5px;width:42px;height:16.5px;background:#ffffff;"></div>
<div class="r" style="left:0px;top:312px;width:42px;height:7px;background:#ffffff;"></div>
<div class="r" style="left:0px;top:319px;width:42px;height:48px;background:#e6f6ec;"></div>
<div class="r" style="left:0px;top:371.0px;width:42px;height:41.670000000000016px;background:#ffffff;"></div>
<div class="r" style="left:0px;top:412.67px;width:42px;height:41.670000000000016px;background:#ffffff;"></div>
<div class="r" style="left:0px;top:454.34000000000003px;width:42px;height:41.670000000000016px;background:#ffffff;"></div>
<div class="r" style="left:0px;top:496.01px;width:42px;height:41.66999999999996px;background:#ffffff;"></div>
<div class="r" style="left:0px;top:537.6800000000001px;width:42px;height:41.66999999999996px;background:#ffffff;"></div>
<div class="r" style="left:0px;top:579.35px;width:42px;height:41.66999999999996px;background:#ffffff;"></div>
<div class="r" style="left:0px;top:621.02px;width:42px;height:41.66999999999996px;background:#ffffff;"></div>
<div class="r" style="left:0px;top:662.69px;width:42px;height:41.66999999999996px;background:#ffffff;"></div>
<div class="r" style="left:0px;top:704.36px;width:42px;height:41.66999999999996px;background:#ffffff;"></div>
<div class="r" style="left:0px;top:746.03px;width:42px;height:41.66999999999996px;background:#ffffff;"></div>
<div class="r" style="left:0px;top:787.7px;width:42px;height:16.299999999999955px;background:#ffffff;"></div>
<div class="r" style="left:0px;top:295px;width:42px;height:1px;background:#d6d8db;"></div>
<div class="t" style="left:21.2px;width:0;display:flex;justify-content:center;top:264.38px;"><span style="white-space:nowrap;font-family:'Liberation Sans';font-size:10.8px;color:#444746;font-weight:normal;display:inline-block">1</span></div>
<div class="r" style="left:0px;top:312px;width:42px;height:1px;background:#d6d8db;"></div>
<div class="t" style="left:21.2px;width:0;display:flex;justify-content:center;top:297.38px;"><span style="white-space:nowrap;font-family:'Liberation Sans';font-size:10.8px;color:#444746;font-weight:normal;display:inline-block">2</span></div>
<div class="r" style="left:0px;top:318px;width:42px;height:1px;background:#d6d8db;"></div>
<div class="r" style="left:0;top:312px;width:42px;height:6.5px;overflow:hidden">
<div class="t" style="left:21px;width:0;display:flex;justify-content:center;top:2.35px;"><span style="white-space:nowrap;font-family:'Liberation Sans';font-size:11px;color:#444746;font-weight:normal;display:inline-block">3</span></div>
</div>
<div class="r" style="left:0px;top:366px;width:42px;height:1px;background:#d6d8db;"></div>
<div class="t" style="left:21.2px;width:0;display:flex;justify-content:center;top:336.63px;"><span style="white-space:nowrap;font-family:'Liberation Sans';font-size:10.8px;color:#444746;font-weight:normal;display:inline-block">4</span></div>
<div class="r" style="left:0px;top:412px;width:42px;height:1px;background:#d6d8db;"></div>
<div class="t" style="left:21.2px;width:0;display:flex;justify-content:center;top:385.46px;"><span style="white-space:nowrap;font-family:'Liberation Sans';font-size:10.8px;color:#444746;font-weight:normal;display:inline-block">5</span></div>
<div class="r" style="left:0px;top:454px;width:42px;height:1px;background:#d6d8db;"></div>
<div class="t" style="left:21.2px;width:0;display:flex;justify-content:center;top:427.13px;"><span style="white-space:nowrap;font-family:'Liberation Sans';font-size:10.8px;color:#444746;font-weight:normal;display:inline-block">6</span></div>
<div class="r" style="left:0px;top:496px;width:42px;height:1px;background:#d6d8db;"></div>
<div class="t" style="left:21.2px;width:0;display:flex;justify-content:center;top:468.80px;"><span style="white-space:nowrap;font-family:'Liberation Sans';font-size:10.8px;color:#444746;font-weight:normal;display:inline-block">7</span></div>
<div class="r" style="left:0px;top:537px;width:42px;height:1px;background:#d6d8db;"></div>
<div class="t" style="left:21.2px;width:0;display:flex;justify-content:center;top:510.47px;"><span style="white-space:nowrap;font-family:'Liberation Sans';font-size:10.8px;color:#444746;font-weight:normal;display:inline-block">8</span></div>
<div class="r" style="left:0px;top:579px;width:42px;height:1px;background:#d6d8db;"></div>
<div class="t" style="left:21.2px;width:0;display:flex;justify-content:center;top:552.14px;"><span style="white-space:nowrap;font-family:'Liberation Sans';font-size:10.8px;color:#444746;font-weight:normal;display:inline-block">9</span></div>
<div class="r" style="left:0px;top:621px;width:42px;height:1px;background:#d6d8db;"></div>
<div class="t" style="left:21.2px;width:0;display:flex;justify-content:center;top:593.81px;"><span style="white-space:nowrap;font-family:'Liberation Sans';font-size:10.8px;color:#444746;font-weight:normal;display:inline-block">10</span></div>
<div class="r" style="left:0px;top:662px;width:42px;height:1px;background:#d6d8db;"></div>
<div class="t" style="left:21.2px;width:0;display:flex;justify-content:center;top:635.48px;"><span style="white-space:nowrap;font-family:'Liberation Sans';font-size:10.8px;color:#444746;font-weight:normal;display:inline-block">11</span></div>
<div class="r" style="left:0px;top:704px;width:42px;height:1px;background:#d6d8db;"></div>
<div class="t" style="left:21.2px;width:0;display:flex;justify-content:center;top:677.15px;"><span style="white-space:nowrap;font-family:'Liberation Sans';font-size:10.8px;color:#444746;font-weight:normal;display:inline-block">12</span></div>
<div class="r" style="left:0px;top:746px;width:42px;height:1px;background:#d6d8db;"></div>
<div class="t" style="left:21.2px;width:0;display:flex;justify-content:center;top:718.82px;"><span style="white-space:nowrap;font-family:'Liberation Sans';font-size:10.8px;color:#444746;font-weight:normal;display:inline-block">13</span></div>
<div class="r" style="left:0px;top:787px;width:42px;height:1px;background:#d6d8db;"></div>
<div class="t" style="left:21.2px;width:0;display:flex;justify-content:center;top:760.49px;"><span style="white-space:nowrap;font-family:'Liberation Sans';font-size:10.8px;color:#444746;font-weight:normal;display:inline-block">14</span></div>
<div class="r" style="left:0px;top:804px;width:42px;height:1px;background:#d6d8db;"></div>
<div class="r" style="left:42px;top:247px;width:1px;height:557px;background:#c7c7c7;"></div>
<div class="r" style="left:43px;top:246px;width:1546.5px;height:66px;background:#767171;"></div>
<div class="r" style="left:57px;top:246px;width:76.2px;height:49px;background:#f1bd31;"></div>
<div class="t" style="left:95.5px;width:0;display:flex;justify-content:center;top:262.16px;"><span style="white-space:nowrap;font-family:'Liberation Sans';font-size:17.5px;color:#000;font-weight:bold;transform:scaleX(1.0);transform-origin:center 0;display:inline-block"><u>MENU</u></span></div>
<div class="t" style="left:289.3px;width:0;display:flex;justify-content:center;top:260.00px;"><span style="white-space:nowrap;font-family:'Liberation Sans';font-size:21px;color:#f7f73b;font-weight:bold;transform:scaleX(0.92);transform-origin:center 0;display:inline-block">POR VEÍCULO</span></div>
<div class="r" style="left:133.2px;top:318.5px;width:765px;height:48.5px;background:#cccccc;border:1.2px solid #5e9c6e"></div>
<div class="r" style="left:898.8px;top:320px;width:89.79999999999995px;height:47px;background:#cccccc;"></div>
<div class="r" style="left:989.6px;top:320px;width:89.80000000000007px;height:47px;background:#cccccc;"></div>
<div class="r" style="left:1080.4px;top:320px;width:89.79999999999995px;height:47px;background:#cccccc;"></div>
<div class="r" style="left:1171.1999999999998px;top:320px;width:89.79999999999995px;height:47px;background:#cccccc;"></div>
<div class="r" style="left:1262.0px;top:320px;width:89.79999999999995px;height:47px;background:#cccccc;"></div>
<div class="r" style="left:1352.8px;top:320px;width:89.79999999999995px;height:47px;background:#cccccc;"></div>
<div class="r" style="left:1443.6px;top:320px;width:89.79999999999995px;height:47px;background:#cccccc;"></div>
<div class="r" style="left:352.2px;top:320px;width:1.6px;height:46.5px;background:#eeeeee;"></div>
<div class="r" style="left:443.0px;top:320px;width:1.6px;height:46.5px;background:#eeeeee;"></div>
<div class="r" style="left:533.8000000000001px;top:320px;width:1.6px;height:46.5px;background:#eeeeee;"></div>
<div class="r" style="left:624.6px;top:320px;width:1.6px;height:46.5px;background:#eeeeee;"></div>
<div class="r" style="left:715.4px;top:320px;width:1.6px;height:46.5px;background:#eeeeee;"></div>
<div class="r" style="left:806.2px;top:320px;width:1.6px;height:46.5px;background:#eeeeee;"></div>
<div class="r" style="left:897.0px;top:320px;width:1.6px;height:46.5px;background:#eeeeee;"></div>
<div class="r" style="left:987.8px;top:320px;width:1.6px;height:46.5px;background:#eeeeee;"></div>
<div class="r" style="left:1078.6000000000001px;top:320px;width:1.6px;height:46.5px;background:#eeeeee;"></div>
<div class="r" style="left:1169.4px;top:320px;width:1.6px;height:46.5px;background:#eeeeee;"></div>
<div class="r" style="left:1260.1999999999998px;top:320px;width:1.6px;height:46.5px;background:#eeeeee;"></div>
<div class="r" style="left:1351.0px;top:320px;width:1.6px;height:46.5px;background:#eeeeee;"></div>
<div class="r" style="left:1441.8px;top:320px;width:1.6px;height:46.5px;background:#eeeeee;"></div>
<div class="t" style="left:234px;width:0;display:flex;justify-content:center;top:337.14px;"><span style="white-space:nowrap;font-family:'Liberation Sans';font-size:12px;color:#111;font-weight:bold;transform:scaleX(0.98);transform-origin:center 0;display:inline-block">Veículo</span></div>
<svg class="r" style="left:337.5px;top:339.5px;" width="12" height="9" viewBox="0 0 12 9"><path d="M0.5 1.2 H11 M2.5 4.3 H9 M4.7 7.4 H6.8" stroke="#4f7d5f" stroke-width="1.4"/></svg>
<div class="t" style="left:389.4px;width:0;display:flex;justify-content:center;top:337.14px;"><span style="white-space:nowrap;font-family:'Liberation Sans';font-size:12px;color:#111;font-weight:bold;transform:scaleX(0.98);transform-origin:center 0;display:inline-block">Janeiro</span></div>
<svg class="r" style="left:428.3px;top:339.5px;" width="12" height="9" viewBox="0 0 12 9"><path d="M0.5 1.2 H11 M2.5 4.3 H9 M4.7 7.4 H6.8" stroke="#4f7d5f" stroke-width="1.4"/></svg>
<div class="t" style="left:480.20000000000005px;width:0;display:flex;justify-content:center;top:337.14px;"><span style="white-space:nowrap;font-family:'Liberation Sans';font-size:12px;color:#111;font-weight:bold;transform:scaleX(0.98);transform-origin:center 0;display:inline-block">Fevereiro</span></div>
<svg class="r" style="left:519.1px;top:339.5px;" width="12" height="9" viewBox="0 0 12 9"><path d="M0.5 1.2 H11 M2.5 4.3 H9 M4.7 7.4 H6.8" stroke="#4f7d5f" stroke-width="1.4"/></svg>
<div class="t" style="left:571.0px;width:0;display:flex;justify-content:center;top:337.14px;"><span style="white-space:nowrap;font-family:'Liberation Sans';font-size:12px;color:#111;font-weight:bold;transform:scaleX(0.98);transform-origin:center 0;display:inline-block">Março</span></div>
<svg class="r" style="left:609.9px;top:339.5px;" width="12" height="9" viewBox="0 0 12 9"><path d="M0.5 1.2 H11 M2.5 4.3 H9 M4.7 7.4 H6.8" stroke="#4f7d5f" stroke-width="1.4"/></svg>
<div class="t" style="left:661.8px;width:0;display:flex;justify-content:center;top:337.14px;"><span style="white-space:nowrap;font-family:'Liberation Sans';font-size:12px;color:#111;font-weight:bold;transform:scaleX(0.98);transform-origin:center 0;display:inline-block">Abril</span></div>
<svg class="r" style="left:700.6999999999999px;top:339.5px;" width="12" height="9" viewBox="0 0 12 9"><path d="M0.5 1.2 H11 M2.5 4.3 H9 M4.7 7.4 H6.8" stroke="#4f7d5f" stroke-width="1.4"/></svg>
<div class="t" style="left:752.6px;width:0;display:flex;justify-content:center;top:337.14px;"><span style="white-space:nowrap;font-family:'Liberation Sans';font-size:12px;color:#111;font-weight:bold;transform:scaleX(0.98);transform-origin:center 0;display:inline-block">Maio</span></div>
<svg class="r" style="left:791.5px;top:339.5px;" width="12" height="9" viewBox="0 0 12 9"><path d="M0.5 1.2 H11 M2.5 4.3 H9 M4.7 7.4 H6.8" stroke="#4f7d5f" stroke-width="1.4"/></svg>
<div class="t" style="left:843.4px;width:0;display:flex;justify-content:center;top:337.14px;"><span style="white-space:nowrap;font-family:'Liberation Sans';font-size:12px;color:#111;font-weight:bold;transform:scaleX(0.98);transform-origin:center 0;display:inline-block">Junho</span></div>
<svg class="r" style="left:882.3px;top:339.5px;" width="12" height="9" viewBox="0 0 12 9"><path d="M0.5 1.2 H11 M2.5 4.3 H9 M4.7 7.4 H6.8" stroke="#4f7d5f" stroke-width="1.4"/></svg>
<div class="t" style="left:943.1999999999999px;width:0;display:flex;justify-content:center;top:337.14px;"><span style="white-space:nowrap;font-family:'Liberation Sans';font-size:12px;color:#111;font-weight:bold;transform:scaleX(0.98);transform-origin:center 0;display:inline-block">Julho</span></div>
<div class="t" style="left:1034.0px;width:0;display:flex;justify-content:center;top:337.14px;"><span style="white-space:nowrap;font-family:'Liberation Sans';font-size:12px;color:#111;font-weight:bold;transform:scaleX(0.98);transform-origin:center 0;display:inline-block">Agosto</span></div>
<div class="t" style="left:1124.8000000000002px;width:0;display:flex;justify-content:center;top:337.14px;"><span style="white-space:nowrap;font-family:'Liberation Sans';font-size:12px;color:#111;font-weight:bold;transform:scaleX(0.98);transform-origin:center 0;display:inline-block">Setembro</span></div>
<div class="t" style="left:1215.6px;width:0;display:flex;justify-content:center;top:337.14px;"><span style="white-space:nowrap;font-family:'Liberation Sans';font-size:12px;color:#111;font-weight:bold;transform:scaleX(0.98);transform-origin:center 0;display:inline-block">Outubro</span></div>
<div class="t" style="left:1306.4px;width:0;display:flex;justify-content:center;top:337.14px;"><span style="white-space:nowrap;font-family:'Liberation Sans';font-size:12px;color:#111;font-weight:bold;transform:scaleX(0.98);transform-origin:center 0;display:inline-block">Novembro</span></div>
<div class="t" style="left:1397.1999999999998px;width:0;display:flex;justify-content:center;top:337.14px;"><span style="white-space:nowrap;font-family:'Liberation Sans';font-size:12px;color:#111;font-weight:bold;transform:scaleX(0.98);transform-origin:center 0;display:inline-block">Dezembro</span></div>
<div class="t" style="left:1488.0px;width:0;display:flex;justify-content:center;top:337.14px;"><span style="white-space:nowrap;font-family:'Liberation Sans';font-size:12px;color:#111;font-weight:bold;transform:scaleX(0.98);transform-origin:center 0;display:inline-block">Total</span></div>
<div class="r" style="left:0px;top:367.5px;width:1589.5px;height:4px;background:#c4c4c4;"></div>
<div class="r" style="left:1590px;top:367.5px;width:10px;height:4px;background:#e3e6ea;"></div>
<div class="r" style="left:133.2px;top:371px;width:1400.2px;height:433px;background:#f2f2f2;"></div>
<div class="r" style="left:133px;top:412px;width:1400.5px;height:1px;background:#d9d9d9;"></div>
<div class="r" style="left:133px;top:454px;width:1400.5px;height:1px;background:#d9d9d9;"></div>
<div class="r" style="left:133px;top:496px;width:1400.5px;height:1px;background:#d9d9d9;"></div>
<div class="r" style="left:133px;top:537px;width:1400.5px;height:1px;background:#d9d9d9;"></div>
<div class="r" style="left:133px;top:579px;width:1400.5px;height:1px;background:#d9d9d9;"></div>
<div class="r" style="left:133px;top:621px;width:1400.5px;height:1px;background:#d9d9d9;"></div>
<div class="r" style="left:133px;top:662px;width:1400.5px;height:1px;background:#d9d9d9;"></div>
<div class="r" style="left:133px;top:704px;width:1400.5px;height:1px;background:#d9d9d9;"></div>
<div class="r" style="left:133px;top:746px;width:1400.5px;height:1px;background:#d9d9d9;"></div>
<div class="r" style="left:133px;top:787px;width:1400.5px;height:1px;background:#d9d9d9;"></div>
<div class="r" style="left:352px;top:371px;width:1px;height:433px;background:#d9d9d9;"></div>
<div class="r" style="left:443px;top:371px;width:1px;height:433px;background:#d9d9d9;"></div>
<div class="r" style="left:534px;top:371px;width:1px;height:433px;background:#d9d9d9;"></div>
<div class="r" style="left:625px;top:371px;width:1px;height:433px;background:#d9d9d9;"></div>
<div class="r" style="left:716px;top:371px;width:1px;height:433px;background:#d9d9d9;"></div>
<div class="r" style="left:806px;top:371px;width:1px;height:433px;background:#d9d9d9;"></div>
<div class="r" style="left:897px;top:371px;width:1px;height:433px;background:#d9d9d9;"></div>
<div class="r" style="left:988px;top:371px;width:1px;height:433px;background:#d9d9d9;"></div>
<div class="r" style="left:1079px;top:371px;width:1px;height:433px;background:#d9d9d9;"></div>
<div class="r" style="left:1170px;top:371px;width:1px;height:433px;background:#d9d9d9;"></div>
<div class="r" style="left:1260px;top:371px;width:1px;height:433px;background:#d9d9d9;"></div>
<div class="r" style="left:1351px;top:371px;width:1px;height:433px;background:#d9d9d9;"></div>
<div class="r" style="left:1442px;top:371px;width:1px;height:433px;background:#d9d9d9;"></div>
<div class="r" style="left:1533px;top:371px;width:1px;height:433px;background:#d9d9d9;"></div>
<div class="t" style="left:137.5px;top:385.89px;font-family:'Liberation Sans';font-size:12px;color:#111;font-weight:normal;transform:scaleX(1.0);transform-origin:left 0;-webkit-text-stroke:0.15px #111;">Fiat Uno 1.0 - KYZ3792</div>
<div class="t" style="left:359.5px;top:385.89px;font-family:'Liberation Sans';font-size:12px;color:#111;font-weight:normal;transform:scaleX(0.88);transform-origin:left 0;-webkit-text-stroke:0.15px #111;">R$</div>
<div class="t" style="right:1162.7px;top:385.89px;font-family:'Liberation Sans';font-size:12px;color:#111;font-weight:normal;transform:scaleX(0.94);transform-origin:right 0;-webkit-text-stroke:0.15px #111;">2.450,00</div>
<div class="t" style="left:450.3px;top:385.89px;font-family:'Liberation Sans';font-size:12px;color:#111;font-weight:normal;transform:scaleX(0.88);transform-origin:left 0;-webkit-text-stroke:0.15px #111;">R$</div>
<div class="t" style="left:509.6px;top:385.89px;font-family:'Liberation Sans';font-size:12px;color:#111;font-weight:normal;-webkit-text-stroke:0.15px #111;">-</div>
<div class="t" style="left:541.1px;top:385.89px;font-family:'Liberation Sans';font-size:12px;color:#111;font-weight:normal;transform:scaleX(0.88);transform-origin:left 0;-webkit-text-stroke:0.15px #111;">R$</div>
<div class="t" style="right:981.1px;top:385.89px;font-family:'Liberation Sans';font-size:12px;color:#111;font-weight:normal;transform:scaleX(0.94);transform-origin:right 0;-webkit-text-stroke:0.15px #111;">250,00</div>
<div class="t" style="left:631.9px;top:385.89px;font-family:'Liberation Sans';font-size:12px;color:#111;font-weight:normal;transform:scaleX(0.88);transform-origin:left 0;-webkit-text-stroke:0.15px #111;">R$</div>
<div class="t" style="right:890.3000000000001px;top:385.89px;font-family:'Liberation Sans';font-size:12px;color:#111;font-weight:normal;transform:scaleX(0.94);transform-origin:right 0;-webkit-text-stroke:0.15px #111;">50,00</div>
<div class="t" style="left:722.7px;top:385.89px;font-family:'Liberation Sans';font-size:12px;color:#111;font-weight:normal;transform:scaleX(0.88);transform-origin:left 0;-webkit-text-stroke:0.15px #111;">R$</div>
<div class="t" style="left:782.0px;top:385.89px;font-family:'Liberation Sans';font-size:12px;color:#111;font-weight:normal;-webkit-text-stroke:0.15px #111;">-</div>
<div class="t" style="left:813.5px;top:385.89px;font-family:'Liberation Sans';font-size:12px;color:#111;font-weight:normal;transform:scaleX(0.88);transform-origin:left 0;-webkit-text-stroke:0.15px #111;">R$</div>
<div class="t" style="left:872.8px;top:385.89px;font-family:'Liberation Sans';font-size:12px;color:#111;font-weight:normal;-webkit-text-stroke:0.15px #111;">-</div>
<div class="t" style="left:904.3px;top:385.89px;font-family:'Liberation Sans';font-size:12px;color:#111;font-weight:normal;transform:scaleX(0.88);transform-origin:left 0;-webkit-text-stroke:0.15px #111;">R$</div>
<div class="t" style="left:963.5999999999999px;top:385.89px;font-family:'Liberation Sans';font-size:12px;color:#111;font-weight:normal;-webkit-text-stroke:0.15px #111;">-</div>
<div class="t" style="left:995.1px;top:385.89px;font-family:'Liberation Sans';font-size:12px;color:#111;font-weight:normal;transform:scaleX(0.88);transform-origin:left 0;-webkit-text-stroke:0.15px #111;">R$</div>
<div class="t" style="left:1054.4px;top:385.89px;font-family:'Liberation Sans';font-size:12px;color:#111;font-weight:normal;-webkit-text-stroke:0.15px #111;">-</div>
<div class="t" style="left:1085.9px;top:385.89px;font-family:'Liberation Sans';font-size:12px;color:#111;font-weight:normal;transform:scaleX(0.88);transform-origin:left 0;-webkit-text-stroke:0.15px #111;">R$</div>
<div class="t" style="left:1145.2px;top:385.89px;font-family:'Liberation Sans';font-size:12px;color:#111;font-weight:normal;-webkit-text-stroke:0.15px #111;">-</div>
<div class="t" style="left:1176.6999999999998px;top:385.89px;font-family:'Liberation Sans';font-size:12px;color:#111;font-weight:normal;transform:scaleX(0.88);transform-origin:left 0;-webkit-text-stroke:0.15px #111;">R$</div>
<div class="t" style="left:1235.9999999999998px;top:385.89px;font-family:'Liberation Sans';font-size:12px;color:#111;font-weight:normal;-webkit-text-stroke:0.15px #111;">-</div>
<div class="t" style="left:1267.5px;top:385.89px;font-family:'Liberation Sans';font-size:12px;color:#111;font-weight:normal;transform:scaleX(0.88);transform-origin:left 0;-webkit-text-stroke:0.15px #111;">R$</div>
<div class="t" style="left:1326.8px;top:385.89px;font-family:'Liberation Sans';font-size:12px;color:#111;font-weight:normal;-webkit-text-stroke:0.15px #111;">-</div>
<div class="t" style="left:1358.3px;top:385.89px;font-family:'Liberation Sans';font-size:12px;color:#111;font-weight:normal;transform:scaleX(0.88);transform-origin:left 0;-webkit-text-stroke:0.15px #111;">R$</div>
<div class="t" style="left:1417.6px;top:385.89px;font-family:'Liberation Sans';font-size:12px;color:#111;font-weight:normal;-webkit-text-stroke:0.15px #111;">-</div>
<div class="t" style="left:1449.1px;top:385.89px;font-family:'Liberation Sans';font-size:12px;color:#111;font-weight:normal;transform:scaleX(0.88);transform-origin:left 0;-webkit-text-stroke:0.15px #111;">R$</div>
<div class="t" style="right:73.10000000000014px;top:385.89px;font-family:'Liberation Sans';font-size:12px;color:#111;font-weight:normal;transform:scaleX(0.94);transform-origin:right 0;-webkit-text-stroke:0.15px #111;">2.750,00</div>
<div class="t" style="left:137.5px;top:427.56px;font-family:'Liberation Sans';font-size:12px;color:#111;font-weight:normal;transform:scaleX(1.0);transform-origin:left 0;-webkit-text-stroke:0.15px #111;">Volkswagen Gol 1.6 - HGD4521</div>
<div class="t" style="left:359.5px;top:427.56px;font-family:'Liberation Sans';font-size:12px;color:#111;font-weight:normal;transform:scaleX(0.88);transform-origin:left 0;-webkit-text-stroke:0.15px #111;">R$</div>
<div class="t" style="right:1162.7px;top:427.56px;font-family:'Liberation Sans';font-size:12px;color:#111;font-weight:normal;transform:scaleX(0.94);transform-origin:right 0;-webkit-text-stroke:0.15px #111;">1.960,00</div>
<div class="t" style="left:450.3px;top:427.56px;font-family:'Liberation Sans';font-size:12px;color:#111;font-weight:normal;transform:scaleX(0.88);transform-origin:left 0;-webkit-text-stroke:0.15px #111;">R$</div>
<div class="t" style="right:1071.9px;top:427.56px;font-family:'Liberation Sans';font-size:12px;color:#111;font-weight:normal;transform:scaleX(0.94);transform-origin:right 0;-webkit-text-stroke:0.15px #111;">2.275,00</div>
<div class="t" style="left:541.1px;top:427.56px;font-family:'Liberation Sans';font-size:12px;color:#111;font-weight:normal;transform:scaleX(0.88);transform-origin:left 0;-webkit-text-stroke:0.15px #111;">R$</div>
<div class="t" style="right:981.1px;top:427.56px;font-family:'Liberation Sans';font-size:12px;color:#111;font-weight:normal;transform:scaleX(0.94);transform-origin:right 0;-webkit-text-stroke:0.15px #111;">325,00</div>
<div class="t" style="left:631.9px;top:427.56px;font-family:'Liberation Sans';font-size:12px;color:#111;font-weight:normal;transform:scaleX(0.88);transform-origin:left 0;-webkit-text-stroke:0.15px #111;">R$</div>
<div class="t" style="right:890.3000000000001px;top:427.56px;font-family:'Liberation Sans';font-size:12px;color:#111;font-weight:normal;transform:scaleX(0.94);transform-origin:right 0;-webkit-text-stroke:0.15px #111;">325,00</div>
<div class="t" style="left:722.7px;top:427.56px;font-family:'Liberation Sans';font-size:12px;color:#111;font-weight:normal;transform:scaleX(0.88);transform-origin:left 0;-webkit-text-stroke:0.15px #111;">R$</div>
<div class="t" style="left:782.0px;top:427.56px;font-family:'Liberation Sans';font-size:12px;color:#111;font-weight:normal;-webkit-text-stroke:0.15px #111;">-</div>
<div class="t" style="left:813.5px;top:427.56px;font-family:'Liberation Sans';font-size:12px;color:#111;font-weight:normal;transform:scaleX(0.88);transform-origin:left 0;-webkit-text-stroke:0.15px #111;">R$</div>
<div class="t" style="left:872.8px;top:427.56px;font-family:'Liberation Sans';font-size:12px;color:#111;font-weight:normal;-webkit-text-stroke:0.15px #111;">-</div>
<div class="t" style="left:904.3px;top:427.56px;font-family:'Liberation Sans';font-size:12px;color:#111;font-weight:normal;transform:scaleX(0.88);transform-origin:left 0;-webkit-text-stroke:0.15px #111;">R$</div>
<div class="t" style="left:963.5999999999999px;top:427.56px;font-family:'Liberation Sans';font-size:12px;color:#111;font-weight:normal;-webkit-text-stroke:0.15px #111;">-</div>
<div class="t" style="left:995.1px;top:427.56px;font-family:'Liberation Sans';font-size:12px;color:#111;font-weight:normal;transform:scaleX(0.88);transform-origin:left 0;-webkit-text-stroke:0.15px #111;">R$</div>
<div class="t" style="left:1054.4px;top:427.56px;font-family:'Liberation Sans';font-size:12px;color:#111;font-weight:normal;-webkit-text-stroke:0.15px #111;">-</div>
<div class="t" style="left:1085.9px;top:427.56px;font-family:'Liberation Sans';font-size:12px;color:#111;font-weight:normal;transform:scaleX(0.88);transform-origin:left 0;-webkit-text-stroke:0.15px #111;">R$</div>
<div class="t" style="left:1145.2px;top:427.56px;font-family:'Liberation Sans';font-size:12px;color:#111;font-weight:normal;-webkit-text-stroke:0.15px #111;">-</div>
<div class="t" style="left:1176.6999999999998px;top:427.56px;font-family:'Liberation Sans';font-size:12px;color:#111;font-weight:normal;transform:scaleX(0.88);transform-origin:left 0;-webkit-text-stroke:0.15px #111;">R$</div>
<div class="t" style="left:1235.9999999999998px;top:427.56px;font-family:'Liberation Sans';font-size:12px;color:#111;font-weight:normal;-webkit-text-stroke:0.15px #111;">-</div>
<div class="t" style="left:1267.5px;top:427.56px;font-family:'Liberation Sans';font-size:12px;color:#111;font-weight:normal;transform:scaleX(0.88);transform-origin:left 0;-webkit-text-stroke:0.15px #111;">R$</div>
<div class="t" style="left:1326.8px;top:427.56px;font-family:'Liberation Sans';font-size:12px;color:#111;font-weight:normal;-webkit-text-stroke:0.15px #111;">-</div>
<div class="t" style="left:1358.3px;top:427.56px;font-family:'Liberation Sans';font-size:12px;color:#111;font-weight:normal;transform:scaleX(0.88);transform-origin:left 0;-webkit-text-stroke:0.15px #111;">R$</div>
<div class="t" style="left:1417.6px;top:427.56px;font-family:'Liberation Sans';font-size:12px;color:#111;font-weight:normal;-webkit-text-stroke:0.15px #111;">-</div>
<div class="t" style="left:1449.1px;top:427.56px;font-family:'Liberation Sans';font-size:12px;color:#111;font-weight:normal;transform:scaleX(0.88);transform-origin:left 0;-webkit-text-stroke:0.15px #111;">R$</div>
<div class="t" style="right:73.10000000000014px;top:427.56px;font-family:'Liberation Sans';font-size:12px;color:#111;font-weight:normal;transform:scaleX(0.94);transform-origin:right 0;-webkit-text-stroke:0.15px #111;">4.885,00</div>
<div class="t" style="left:137.5px;top:469.23px;font-family:'Liberation Sans';font-size:12px;color:#111;font-weight:normal;transform:scaleX(1.0);transform-origin:left 0;-webkit-text-stroke:0.15px #111;">Chevrolet Onix 1.0 - JKL9832</div>
<div class="t" style="left:359.5px;top:469.23px;font-family:'Liberation Sans';font-size:12px;color:#111;font-weight:normal;transform:scaleX(0.88);transform-origin:left 0;-webkit-text-stroke:0.15px #111;">R$</div>
<div class="t" style="left:418.8px;top:469.23px;font-family:'Liberation Sans';font-size:12px;color:#111;font-weight:normal;-webkit-text-stroke:0.15px #111;">-</div>
<div class="t" style="left:450.3px;top:469.23px;font-family:'Liberation Sans';font-size:12px;color:#111;font-weight:normal;transform:scaleX(0.88);transform-origin:left 0;-webkit-text-stroke:0.15px #111;">R$</div>
<div class="t" style="left:509.6px;top:469.23px;font-family:'Liberation Sans';font-size:12px;color:#111;font-weight:normal;-webkit-text-stroke:0.15px #111;">-</div>
<div class="t" style="left:541.1px;top:469.23px;font-family:'Liberation Sans';font-size:12px;color:#111;font-weight:normal;transform:scaleX(0.88);transform-origin:left 0;-webkit-text-stroke:0.15px #111;">R$</div>
<div class="t" style="left:600.4px;top:469.23px;font-family:'Liberation Sans';font-size:12px;color:#111;font-weight:normal;-webkit-text-stroke:0.15px #111;">-</div>
<div class="t" style="left:631.9px;top:469.23px;font-family:'Liberation Sans';font-size:12px;color:#111;font-weight:normal;transform:scaleX(0.88);transform-origin:left 0;-webkit-text-stroke:0.15px #111;">R$</div>
<div class="t" style="left:691.1999999999999px;top:469.23px;font-family:'Liberation Sans';font-size:12px;color:#111;font-weight:normal;-webkit-text-stroke:0.15px #111;">-</div>
<div class="t" style="left:722.7px;top:469.23px;font-family:'Liberation Sans';font-size:12px;color:#111;font-weight:normal;transform:scaleX(0.88);transform-origin:left 0;-webkit-text-stroke:0.15px #111;">R$</div>
<div class="t" style="left:782.0px;top:469.23px;font-family:'Liberation Sans';font-size:12px;color:#111;font-weight:normal;-webkit-text-stroke:0.15px #111;">-</div>
<div class="t" style="left:813.5px;top:469.23px;font-family:'Liberation Sans';font-size:12px;color:#111;font-weight:normal;transform:scaleX(0.88);transform-origin:left 0;-webkit-text-stroke:0.15px #111;">R$</div>
<div class="t" style="left:872.8px;top:469.23px;font-family:'Liberation Sans';font-size:12px;color:#111;font-weight:normal;-webkit-text-stroke:0.15px #111;">-</div>
<div class="t" style="left:904.3px;top:469.23px;font-family:'Liberation Sans';font-size:12px;color:#111;font-weight:normal;transform:scaleX(0.88);transform-origin:left 0;-webkit-text-stroke:0.15px #111;">R$</div>
<div class="t" style="left:963.5999999999999px;top:469.23px;font-family:'Liberation Sans';font-size:12px;color:#111;font-weight:normal;-webkit-text-stroke:0.15px #111;">-</div>
<div class="t" style="left:995.1px;top:469.23px;font-family:'Liberation Sans';font-size:12px;color:#111;font-weight:normal;transform:scaleX(0.88);transform-origin:left 0;-webkit-text-stroke:0.15px #111;">R$</div>
<div class="t" style="left:1054.4px;top:469.23px;font-family:'Liberation Sans';font-size:12px;color:#111;font-weight:normal;-webkit-text-stroke:0.15px #111;">-</div>
<div class="t" style="left:1085.9px;top:469.23px;font-family:'Liberation Sans';font-size:12px;color:#111;font-weight:normal;transform:scaleX(0.88);transform-origin:left 0;-webkit-text-stroke:0.15px #111;">R$</div>
<div class="t" style="left:1145.2px;top:469.23px;font-family:'Liberation Sans';font-size:12px;color:#111;font-weight:normal;-webkit-text-stroke:0.15px #111;">-</div>
<div class="t" style="left:1176.6999999999998px;top:469.23px;font-family:'Liberation Sans';font-size:12px;color:#111;font-weight:normal;transform:scaleX(0.88);transform-origin:left 0;-webkit-text-stroke:0.15px #111;">R$</div>
<div class="t" style="left:1235.9999999999998px;top:469.23px;font-family:'Liberation Sans';font-size:12px;color:#111;font-weight:normal;-webkit-text-stroke:0.15px #111;">-</div>
<div class="t" style="left:1267.5px;top:469.23px;font-family:'Liberation Sans';font-size:12px;color:#111;font-weight:normal;transform:scaleX(0.88);transform-origin:left 0;-webkit-text-stroke:0.15px #111;">R$</div>
<div class="t" style="left:1326.8px;top:469.23px;font-family:'Liberation Sans';font-size:12px;color:#111;font-weight:normal;-webkit-text-stroke:0.15px #111;">-</div>
<div class="t" style="left:1358.3px;top:469.23px;font-family:'Liberation Sans';font-size:12px;color:#111;font-weight:normal;transform:scaleX(0.88);transform-origin:left 0;-webkit-text-stroke:0.15px #111;">R$</div>
<div class="t" style="left:1417.6px;top:469.23px;font-family:'Liberation Sans';font-size:12px;color:#111;font-weight:normal;-webkit-text-stroke:0.15px #111;">-</div>
<div class="t" style="left:1449.1px;top:469.23px;font-family:'Liberation Sans';font-size:12px;color:#111;font-weight:normal;transform:scaleX(0.88);transform-origin:left 0;-webkit-text-stroke:0.15px #111;">R$</div>
<div class="t" style="right:73.10000000000014px;top:469.23px;font-family:'Liberation Sans';font-size:12px;color:#111;font-weight:normal;transform:scaleX(0.94);transform-origin:right 0;-webkit-text-stroke:0.15px #111;">0,00</div>
<div class="t" style="left:137.5px;top:510.90px;font-family:'Liberation Sans';font-size:12px;color:#111;font-weight:normal;transform:scaleX(1.0);transform-origin:left 0;-webkit-text-stroke:0.15px #111;">Renault Kwid 1.0 - LMG7214</div>
<div class="t" style="left:359.5px;top:510.90px;font-family:'Liberation Sans';font-size:12px;color:#111;font-weight:normal;transform:scaleX(0.88);transform-origin:left 0;-webkit-text-stroke:0.15px #111;">R$</div>
<div class="t" style="right:1162.7px;top:510.90px;font-family:'Liberation Sans';font-size:12px;color:#111;font-weight:normal;transform:scaleX(0.94);transform-origin:right 0;-webkit-text-stroke:0.15px #111;">275,00</div>
<div class="t" style="left:450.3px;top:510.90px;font-family:'Liberation Sans';font-size:12px;color:#111;font-weight:normal;transform:scaleX(0.88);transform-origin:left 0;-webkit-text-stroke:0.15px #111;">R$</div>
<div class="t" style="right:1071.9px;top:510.90px;font-family:'Liberation Sans';font-size:12px;color:#111;font-weight:normal;transform:scaleX(0.94);transform-origin:right 0;-webkit-text-stroke:0.15px #111;">220,00</div>
<div class="t" style="left:541.1px;top:510.90px;font-family:'Liberation Sans';font-size:12px;color:#111;font-weight:normal;transform:scaleX(0.88);transform-origin:left 0;-webkit-text-stroke:0.15px #111;">R$</div>
<div class="t" style="right:981.1px;top:510.90px;font-family:'Liberation Sans';font-size:12px;color:#111;font-weight:normal;transform:scaleX(0.94);transform-origin:right 0;-webkit-text-stroke:0.15px #111;">220,00</div>
<div class="t" style="left:631.9px;top:510.90px;font-family:'Liberation Sans';font-size:12px;color:#111;font-weight:normal;transform:scaleX(0.88);transform-origin:left 0;-webkit-text-stroke:0.15px #111;">R$</div>
<div class="t" style="left:691.1999999999999px;top:510.90px;font-family:'Liberation Sans';font-size:12px;color:#111;font-weight:normal;-webkit-text-stroke:0.15px #111;">-</div>
<div class="t" style="left:722.7px;top:510.90px;font-family:'Liberation Sans';font-size:12px;color:#111;font-weight:normal;transform:scaleX(0.88);transform-origin:left 0;-webkit-text-stroke:0.15px #111;">R$</div>
<div class="t" style="left:782.0px;top:510.90px;font-family:'Liberation Sans';font-size:12px;color:#111;font-weight:normal;-webkit-text-stroke:0.15px #111;">-</div>
<div class="t" style="left:813.5px;top:510.90px;font-family:'Liberation Sans';font-size:12px;color:#111;font-weight:normal;transform:scaleX(0.88);transform-origin:left 0;-webkit-text-stroke:0.15px #111;">R$</div>
<div class="t" style="left:872.8px;top:510.90px;font-family:'Liberation Sans';font-size:12px;color:#111;font-weight:normal;-webkit-text-stroke:0.15px #111;">-</div>
<div class="t" style="left:904.3px;top:510.90px;font-family:'Liberation Sans';font-size:12px;color:#111;font-weight:normal;transform:scaleX(0.88);transform-origin:left 0;-webkit-text-stroke:0.15px #111;">R$</div>
<div class="t" style="left:963.5999999999999px;top:510.90px;font-family:'Liberation Sans';font-size:12px;color:#111;font-weight:normal;-webkit-text-stroke:0.15px #111;">-</div>
<div class="t" style="left:995.1px;top:510.90px;font-family:'Liberation Sans';font-size:12px;color:#111;font-weight:normal;transform:scaleX(0.88);transform-origin:left 0;-webkit-text-stroke:0.15px #111;">R$</div>
<div class="t" style="left:1054.4px;top:510.90px;font-family:'Liberation Sans';font-size:12px;color:#111;font-weight:normal;-webkit-text-stroke:0.15px #111;">-</div>
<div class="t" style="left:1085.9px;top:510.90px;font-family:'Liberation Sans';font-size:12px;color:#111;font-weight:normal;transform:scaleX(0.88);transform-origin:left 0;-webkit-text-stroke:0.15px #111;">R$</div>
<div class="t" style="left:1145.2px;top:510.90px;font-family:'Liberation Sans';font-size:12px;color:#111;font-weight:normal;-webkit-text-stroke:0.15px #111;">-</div>
<div class="t" style="left:1176.6999999999998px;top:510.90px;font-family:'Liberation Sans';font-size:12px;color:#111;font-weight:normal;transform:scaleX(0.88);transform-origin:left 0;-webkit-text-stroke:0.15px #111;">R$</div>
<div class="t" style="left:1235.9999999999998px;top:510.90px;font-family:'Liberation Sans';font-size:12px;color:#111;font-weight:normal;-webkit-text-stroke:0.15px #111;">-</div>
<div class="t" style="left:1267.5px;top:510.90px;font-family:'Liberation Sans';font-size:12px;color:#111;font-weight:normal;transform:scaleX(0.88);transform-origin:left 0;-webkit-text-stroke:0.15px #111;">R$</div>
<div class="t" style="left:1326.8px;top:510.90px;font-family:'Liberation Sans';font-size:12px;color:#111;font-weight:normal;-webkit-text-stroke:0.15px #111;">-</div>
<div class="t" style="left:1358.3px;top:510.90px;font-family:'Liberation Sans';font-size:12px;color:#111;font-weight:normal;transform:scaleX(0.88);transform-origin:left 0;-webkit-text-stroke:0.15px #111;">R$</div>
<div class="t" style="left:1417.6px;top:510.90px;font-family:'Liberation Sans';font-size:12px;color:#111;font-weight:normal;-webkit-text-stroke:0.15px #111;">-</div>
<div class="t" style="left:1449.1px;top:510.90px;font-family:'Liberation Sans';font-size:12px;color:#111;font-weight:normal;transform:scaleX(0.88);transform-origin:left 0;-webkit-text-stroke:0.15px #111;">R$</div>
<div class="t" style="right:73.10000000000014px;top:510.90px;font-family:'Liberation Sans';font-size:12px;color:#111;font-weight:normal;transform:scaleX(0.94);transform-origin:right 0;-webkit-text-stroke:0.15px #111;">715,00</div>
<div class="t" style="left:137.5px;top:552.57px;font-family:'Liberation Sans';font-size:12px;color:#111;font-weight:normal;transform:scaleX(1.0);transform-origin:left 0;-webkit-text-stroke:0.15px #111;">Toyota Corolla 2.0 - MNP6157</div>
<div class="t" style="left:359.5px;top:552.57px;font-family:'Liberation Sans';font-size:12px;color:#111;font-weight:normal;transform:scaleX(0.88);transform-origin:left 0;-webkit-text-stroke:0.15px #111;">R$</div>
<div class="t" style="right:1162.7px;top:552.57px;font-family:'Liberation Sans';font-size:12px;color:#111;font-weight:normal;transform:scaleX(0.94);transform-origin:right 0;-webkit-text-stroke:0.15px #111;">1.090,00</div>
<div class="t" style="left:450.3px;top:552.57px;font-family:'Liberation Sans';font-size:12px;color:#111;font-weight:normal;transform:scaleX(0.88);transform-origin:left 0;-webkit-text-stroke:0.15px #111;">R$</div>
<div class="t" style="right:1071.9px;top:552.57px;font-family:'Liberation Sans';font-size:12px;color:#111;font-weight:normal;transform:scaleX(0.94);transform-origin:right 0;-webkit-text-stroke:0.15px #111;">360,00</div>
<div class="t" style="left:541.1px;top:552.57px;font-family:'Liberation Sans';font-size:12px;color:#111;font-weight:normal;transform:scaleX(0.88);transform-origin:left 0;-webkit-text-stroke:0.15px #111;">R$</div>
<div class="t" style="right:981.1px;top:552.57px;font-family:'Liberation Sans';font-size:12px;color:#111;font-weight:normal;transform:scaleX(0.94);transform-origin:right 0;-webkit-text-stroke:0.15px #111;">960,00</div>
<div class="t" style="left:631.9px;top:552.57px;font-family:'Liberation Sans';font-size:12px;color:#111;font-weight:normal;transform:scaleX(0.88);transform-origin:left 0;-webkit-text-stroke:0.15px #111;">R$</div>
<div class="t" style="right:890.3000000000001px;top:552.57px;font-family:'Liberation Sans';font-size:12px;color:#111;font-weight:normal;transform:scaleX(0.94);transform-origin:right 0;-webkit-text-stroke:0.15px #111;">4.080,00</div>
<div class="t" style="left:722.7px;top:552.57px;font-family:'Liberation Sans';font-size:12px;color:#111;font-weight:normal;transform:scaleX(0.88);transform-origin:left 0;-webkit-text-stroke:0.15px #111;">R$</div>
<div class="t" style="left:782.0px;top:552.57px;font-family:'Liberation Sans';font-size:12px;color:#111;font-weight:normal;-webkit-text-stroke:0.15px #111;">-</div>
<div class="t" style="left:813.5px;top:552.57px;font-family:'Liberation Sans';font-size:12px;color:#111;font-weight:normal;transform:scaleX(0.88);transform-origin:left 0;-webkit-text-stroke:0.15px #111;">R$</div>
<div class="t" style="left:872.8px;top:552.57px;font-family:'Liberation Sans';font-size:12px;color:#111;font-weight:normal;-webkit-text-stroke:0.15px #111;">-</div>
<div class="t" style="left:904.3px;top:552.57px;font-family:'Liberation Sans';font-size:12px;color:#111;font-weight:normal;transform:scaleX(0.88);transform-origin:left 0;-webkit-text-stroke:0.15px #111;">R$</div>
<div class="t" style="left:963.5999999999999px;top:552.57px;font-family:'Liberation Sans';font-size:12px;color:#111;font-weight:normal;-webkit-text-stroke:0.15px #111;">-</div>
<div class="t" style="left:995.1px;top:552.57px;font-family:'Liberation Sans';font-size:12px;color:#111;font-weight:normal;transform:scaleX(0.88);transform-origin:left 0;-webkit-text-stroke:0.15px #111;">R$</div>
<div class="t" style="left:1054.4px;top:552.57px;font-family:'Liberation Sans';font-size:12px;color:#111;font-weight:normal;-webkit-text-stroke:0.15px #111;">-</div>
<div class="t" style="left:1085.9px;top:552.57px;font-family:'Liberation Sans';font-size:12px;color:#111;font-weight:normal;transform:scaleX(0.88);transform-origin:left 0;-webkit-text-stroke:0.15px #111;">R$</div>
<div class="t" style="left:1145.2px;top:552.57px;font-family:'Liberation Sans';font-size:12px;color:#111;font-weight:normal;-webkit-text-stroke:0.15px #111;">-</div>
<div class="t" style="left:1176.6999999999998px;top:552.57px;font-family:'Liberation Sans';font-size:12px;color:#111;font-weight:normal;transform:scaleX(0.88);transform-origin:left 0;-webkit-text-stroke:0.15px #111;">R$</div>
<div class="t" style="left:1235.9999999999998px;top:552.57px;font-family:'Liberation Sans';font-size:12px;color:#111;font-weight:normal;-webkit-text-stroke:0.15px #111;">-</div>
<div class="t" style="left:1267.5px;top:552.57px;font-family:'Liberation Sans';font-size:12px;color:#111;font-weight:normal;transform:scaleX(0.88);transform-origin:left 0;-webkit-text-stroke:0.15px #111;">R$</div>
<div class="t" style="left:1326.8px;top:552.57px;font-family:'Liberation Sans';font-size:12px;color:#111;font-weight:normal;-webkit-text-stroke:0.15px #111;">-</div>
<div class="t" style="left:1358.3px;top:552.57px;font-family:'Liberation Sans';font-size:12px;color:#111;font-weight:normal;transform:scaleX(0.88);transform-origin:left 0;-webkit-text-stroke:0.15px #111;">R$</div>
<div class="t" style="left:1417.6px;top:552.57px;font-family:'Liberation Sans';font-size:12px;color:#111;font-weight:normal;-webkit-text-stroke:0.15px #111;">-</div>
<div class="t" style="left:1449.1px;top:552.57px;font-family:'Liberation Sans';font-size:12px;color:#111;font-weight:normal;transform:scaleX(0.88);transform-origin:left 0;-webkit-text-stroke:0.15px #111;">R$</div>
<div class="t" style="right:73.10000000000014px;top:552.57px;font-family:'Liberation Sans';font-size:12px;color:#111;font-weight:normal;transform:scaleX(0.94);transform-origin:right 0;-webkit-text-stroke:0.15px #111;">6.490,00</div>
<div class="t" style="left:137.5px;top:594.24px;font-family:'Liberation Sans';font-size:12px;color:#111;font-weight:normal;transform:scaleX(1.0);transform-origin:left 0;-webkit-text-stroke:0.15px #111;">Hyundai HB20 1.6 - PQT4432</div>
<div class="t" style="left:359.5px;top:594.24px;font-family:'Liberation Sans';font-size:12px;color:#111;font-weight:normal;transform:scaleX(0.88);transform-origin:left 0;-webkit-text-stroke:0.15px #111;">R$</div>
<div class="t" style="left:418.8px;top:594.24px;font-family:'Liberation Sans';font-size:12px;color:#111;font-weight:normal;-webkit-text-stroke:0.15px #111;">-</div>
<div class="t" style="left:450.3px;top:594.24px;font-family:'Liberation Sans';font-size:12px;color:#111;font-weight:normal;transform:scaleX(0.88);transform-origin:left 0;-webkit-text-stroke:0.15px #111;">R$</div>
<div class="t" style="left:509.6px;top:594.24px;font-family:'Liberation Sans';font-size:12px;color:#111;font-weight:normal;-webkit-text-stroke:0.15px #111;">-</div>
<div class="t" style="left:541.1px;top:594.24px;font-family:'Liberation Sans';font-size:12px;color:#111;font-weight:normal;transform:scaleX(0.88);transform-origin:left 0;-webkit-text-stroke:0.15px #111;">R$</div>
<div class="t" style="left:600.4px;top:594.24px;font-family:'Liberation Sans';font-size:12px;color:#111;font-weight:normal;-webkit-text-stroke:0.15px #111;">-</div>
<div class="t" style="left:631.9px;top:594.24px;font-family:'Liberation Sans';font-size:12px;color:#111;font-weight:normal;transform:scaleX(0.88);transform-origin:left 0;-webkit-text-stroke:0.15px #111;">R$</div>
<div class="t" style="left:691.1999999999999px;top:594.24px;font-family:'Liberation Sans';font-size:12px;color:#111;font-weight:normal;-webkit-text-stroke:0.15px #111;">-</div>
<div class="t" style="left:722.7px;top:594.24px;font-family:'Liberation Sans';font-size:12px;color:#111;font-weight:normal;transform:scaleX(0.88);transform-origin:left 0;-webkit-text-stroke:0.15px #111;">R$</div>
<div class="t" style="left:782.0px;top:594.24px;font-family:'Liberation Sans';font-size:12px;color:#111;font-weight:normal;-webkit-text-stroke:0.15px #111;">-</div>
<div class="t" style="left:813.5px;top:594.24px;font-family:'Liberation Sans';font-size:12px;color:#111;font-weight:normal;transform:scaleX(0.88);transform-origin:left 0;-webkit-text-stroke:0.15px #111;">R$</div>
<div class="t" style="left:872.8px;top:594.24px;font-family:'Liberation Sans';font-size:12px;color:#111;font-weight:normal;-webkit-text-stroke:0.15px #111;">-</div>
<div class="t" style="left:904.3px;top:594.24px;font-family:'Liberation Sans';font-size:12px;color:#111;font-weight:normal;transform:scaleX(0.88);transform-origin:left 0;-webkit-text-stroke:0.15px #111;">R$</div>
<div class="t" style="left:963.5999999999999px;top:594.24px;font-family:'Liberation Sans';font-size:12px;color:#111;font-weight:normal;-webkit-text-stroke:0.15px #111;">-</div>
<div class="t" style="left:995.1px;top:594.24px;font-family:'Liberation Sans';font-size:12px;color:#111;font-weight:normal;transform:scaleX(0.88);transform-origin:left 0;-webkit-text-stroke:0.15px #111;">R$</div>
<div class="t" style="left:1054.4px;top:594.24px;font-family:'Liberation Sans';font-size:12px;color:#111;font-weight:normal;-webkit-text-stroke:0.15px #111;">-</div>
<div class="t" style="left:1085.9px;top:594.24px;font-family:'Liberation Sans';font-size:12px;color:#111;font-weight:normal;transform:scaleX(0.88);transform-origin:left 0;-webkit-text-stroke:0.15px #111;">R$</div>
<div class="t" style="left:1145.2px;top:594.24px;font-family:'Liberation Sans';font-size:12px;color:#111;font-weight:normal;-webkit-text-stroke:0.15px #111;">-</div>
<div class="t" style="left:1176.6999999999998px;top:594.24px;font-family:'Liberation Sans';font-size:12px;color:#111;font-weight:normal;transform:scaleX(0.88);transform-origin:left 0;-webkit-text-stroke:0.15px #111;">R$</div>
<div class="t" style="left:1235.9999999999998px;top:594.24px;font-family:'Liberation Sans';font-size:12px;color:#111;font-weight:normal;-webkit-text-stroke:0.15px #111;">-</div>
<div class="t" style="left:1267.5px;top:594.24px;font-family:'Liberation Sans';font-size:12px;color:#111;font-weight:normal;transform:scaleX(0.88);transform-origin:left 0;-webkit-text-stroke:0.15px #111;">R$</div>
<div class="t" style="left:1326.8px;top:594.24px;font-family:'Liberation Sans';font-size:12px;color:#111;font-weight:normal;-webkit-text-stroke:0.15px #111;">-</div>
<div class="t" style="left:1358.3px;top:594.24px;font-family:'Liberation Sans';font-size:12px;color:#111;font-weight:normal;transform:scaleX(0.88);transform-origin:left 0;-webkit-text-stroke:0.15px #111;">R$</div>
<div class="t" style="left:1417.6px;top:594.24px;font-family:'Liberation Sans';font-size:12px;color:#111;font-weight:normal;-webkit-text-stroke:0.15px #111;">-</div>
<div class="t" style="left:1449.1px;top:594.24px;font-family:'Liberation Sans';font-size:12px;color:#111;font-weight:normal;transform:scaleX(0.88);transform-origin:left 0;-webkit-text-stroke:0.15px #111;">R$</div>
<div class="t" style="right:73.10000000000014px;top:594.24px;font-family:'Liberation Sans';font-size:12px;color:#111;font-weight:normal;transform:scaleX(0.94);transform-origin:right 0;-webkit-text-stroke:0.15px #111;">0,00</div>
<div class="t" style="left:137.5px;top:635.91px;font-family:'Liberation Sans';font-size:12px;color:#111;font-weight:normal;transform:scaleX(1.0);transform-origin:left 0;-webkit-text-stroke:0.15px #111;">Honda Civic 2.0 - RST2298</div>
<div class="t" style="left:359.5px;top:635.91px;font-family:'Liberation Sans';font-size:12px;color:#111;font-weight:normal;transform:scaleX(0.88);transform-origin:left 0;-webkit-text-stroke:0.15px #111;">R$</div>
<div class="t" style="right:1162.7px;top:635.91px;font-family:'Liberation Sans';font-size:12px;color:#111;font-weight:normal;transform:scaleX(0.94);transform-origin:right 0;-webkit-text-stroke:0.15px #111;">9.000,00</div>
<div class="t" style="left:450.3px;top:635.91px;font-family:'Liberation Sans';font-size:12px;color:#111;font-weight:normal;transform:scaleX(0.88);transform-origin:left 0;-webkit-text-stroke:0.15px #111;">R$</div>
<div class="t" style="right:1071.9px;top:635.91px;font-family:'Liberation Sans';font-size:12px;color:#111;font-weight:normal;transform:scaleX(0.94);transform-origin:right 0;-webkit-text-stroke:0.15px #111;">9.000,00</div>
<div class="t" style="left:541.1px;top:635.91px;font-family:'Liberation Sans';font-size:12px;color:#111;font-weight:normal;transform:scaleX(0.88);transform-origin:left 0;-webkit-text-stroke:0.15px #111;">R$</div>
<div class="t" style="right:981.1px;top:635.91px;font-family:'Liberation Sans';font-size:12px;color:#111;font-weight:normal;transform:scaleX(0.94);transform-origin:right 0;-webkit-text-stroke:0.15px #111;">9.000,00</div>
<div class="t" style="left:631.9px;top:635.91px;font-family:'Liberation Sans';font-size:12px;color:#111;font-weight:normal;transform:scaleX(0.88);transform-origin:left 0;-webkit-text-stroke:0.15px #111;">R$</div>
<div class="t" style="right:890.3000000000001px;top:635.91px;font-family:'Liberation Sans';font-size:12px;color:#111;font-weight:normal;transform:scaleX(0.94);transform-origin:right 0;-webkit-text-stroke:0.15px #111;">11.700,00</div>
<div class="t" style="left:722.7px;top:635.91px;font-family:'Liberation Sans';font-size:12px;color:#111;font-weight:normal;transform:scaleX(0.88);transform-origin:left 0;-webkit-text-stroke:0.15px #111;">R$</div>
<div class="t" style="left:782.0px;top:635.91px;font-family:'Liberation Sans';font-size:12px;color:#111;font-weight:normal;-webkit-text-stroke:0.15px #111;">-</div>
<div class="t" style="left:813.5px;top:635.91px;font-family:'Liberation Sans';font-size:12px;color:#111;font-weight:normal;transform:scaleX(0.88);transform-origin:left 0;-webkit-text-stroke:0.15px #111;">R$</div>
<div class="t" style="left:872.8px;top:635.91px;font-family:'Liberation Sans';font-size:12px;color:#111;font-weight:normal;-webkit-text-stroke:0.15px #111;">-</div>
<div class="t" style="left:904.3px;top:635.91px;font-family:'Liberation Sans';font-size:12px;color:#111;font-weight:normal;transform:scaleX(0.88);transform-origin:left 0;-webkit-text-stroke:0.15px #111;">R$</div>
<div class="t" style="left:963.5999999999999px;top:635.91px;font-family:'Liberation Sans';font-size:12px;color:#111;font-weight:normal;-webkit-text-stroke:0.15px #111;">-</div>
<div class="t" style="left:995.1px;top:635.91px;font-family:'Liberation Sans';font-size:12px;color:#111;font-weight:normal;transform:scaleX(0.88);transform-origin:left 0;-webkit-text-stroke:0.15px #111;">R$</div>
<div class="t" style="left:1054.4px;top:635.91px;font-family:'Liberation Sans';font-size:12px;color:#111;font-weight:normal;-webkit-text-stroke:0.15px #111;">-</div>
<div class="t" style="left:1085.9px;top:635.91px;font-family:'Liberation Sans';font-size:12px;color:#111;font-weight:normal;transform:scaleX(0.88);transform-origin:left 0;-webkit-text-stroke:0.15px #111;">R$</div>
<div class="t" style="left:1145.2px;top:635.91px;font-family:'Liberation Sans';font-size:12px;color:#111;font-weight:normal;-webkit-text-stroke:0.15px #111;">-</div>
<div class="t" style="left:1176.6999999999998px;top:635.91px;font-family:'Liberation Sans';font-size:12px;color:#111;font-weight:normal;transform:scaleX(0.88);transform-origin:left 0;-webkit-text-stroke:0.15px #111;">R$</div>
<div class="t" style="left:1235.9999999999998px;top:635.91px;font-family:'Liberation Sans';font-size:12px;color:#111;font-weight:normal;-webkit-text-stroke:0.15px #111;">-</div>
<div class="t" style="left:1267.5px;top:635.91px;font-family:'Liberation Sans';font-size:12px;color:#111;font-weight:normal;transform:scaleX(0.88);transform-origin:left 0;-webkit-text-stroke:0.15px #111;">R$</div>
<div class="t" style="left:1326.8px;top:635.91px;font-family:'Liberation Sans';font-size:12px;color:#111;font-weight:normal;-webkit-text-stroke:0.15px #111;">-</div>
<div class="t" style="left:1358.3px;top:635.91px;font-family:'Liberation Sans';font-size:12px;color:#111;font-weight:normal;transform:scaleX(0.88);transform-origin:left 0;-webkit-text-stroke:0.15px #111;">R$</div>
<div class="t" style="left:1417.6px;top:635.91px;font-family:'Liberation Sans';font-size:12px;color:#111;font-weight:normal;-webkit-text-stroke:0.15px #111;">-</div>
<div class="t" style="left:1449.1px;top:635.91px;font-family:'Liberation Sans';font-size:12px;color:#111;font-weight:normal;transform:scaleX(0.88);transform-origin:left 0;-webkit-text-stroke:0.15px #111;">R$</div>
<div class="t" style="right:73.10000000000014px;top:635.91px;font-family:'Liberation Sans';font-size:12px;color:#111;font-weight:normal;transform:scaleX(0.94);transform-origin:right 0;-webkit-text-stroke:0.15px #111;">38.700,00</div>
<div class="t" style="left:137.5px;top:677.58px;font-family:'Liberation Sans';font-size:12px;color:#111;font-weight:normal;transform:scaleX(1.0);transform-origin:left 0;-webkit-text-stroke:0.15px #111;">Jeep Renegade 1.8 - UVW6543</div>
<div class="t" style="left:359.5px;top:677.58px;font-family:'Liberation Sans';font-size:12px;color:#111;font-weight:normal;transform:scaleX(0.88);transform-origin:left 0;-webkit-text-stroke:0.15px #111;">R$</div>
<div class="t" style="left:418.8px;top:677.58px;font-family:'Liberation Sans';font-size:12px;color:#111;font-weight:normal;-webkit-text-stroke:0.15px #111;">-</div>
<div class="t" style="left:450.3px;top:677.58px;font-family:'Liberation Sans';font-size:12px;color:#111;font-weight:normal;transform:scaleX(0.88);transform-origin:left 0;-webkit-text-stroke:0.15px #111;">R$</div>
<div class="t" style="left:509.6px;top:677.58px;font-family:'Liberation Sans';font-size:12px;color:#111;font-weight:normal;-webkit-text-stroke:0.15px #111;">-</div>
<div class="t" style="left:541.1px;top:677.58px;font-family:'Liberation Sans';font-size:12px;color:#111;font-weight:normal;transform:scaleX(0.88);transform-origin:left 0;-webkit-text-stroke:0.15px #111;">R$</div>
<div class="t" style="left:600.4px;top:677.58px;font-family:'Liberation Sans';font-size:12px;color:#111;font-weight:normal;-webkit-text-stroke:0.15px #111;">-</div>
<div class="t" style="left:631.9px;top:677.58px;font-family:'Liberation Sans';font-size:12px;color:#111;font-weight:normal;transform:scaleX(0.88);transform-origin:left 0;-webkit-text-stroke:0.15px #111;">R$</div>
<div class="t" style="left:691.1999999999999px;top:677.58px;font-family:'Liberation Sans';font-size:12px;color:#111;font-weight:normal;-webkit-text-stroke:0.15px #111;">-</div>
<div class="t" style="left:722.7px;top:677.58px;font-family:'Liberation Sans';font-size:12px;color:#111;font-weight:normal;transform:scaleX(0.88);transform-origin:left 0;-webkit-text-stroke:0.15px #111;">R$</div>
<div class="t" style="left:782.0px;top:677.58px;font-family:'Liberation Sans';font-size:12px;color:#111;font-weight:normal;-webkit-text-stroke:0.15px #111;">-</div>
<div class="t" style="left:813.5px;top:677.58px;font-family:'Liberation Sans';font-size:12px;color:#111;font-weight:normal;transform:scaleX(0.88);transform-origin:left 0;-webkit-text-stroke:0.15px #111;">R$</div>
<div class="t" style="left:872.8px;top:677.58px;font-family:'Liberation Sans';font-size:12px;color:#111;font-weight:normal;-webkit-text-stroke:0.15px #111;">-</div>
<div class="t" style="left:904.3px;top:677.58px;font-family:'Liberation Sans';font-size:12px;color:#111;font-weight:normal;transform:scaleX(0.88);transform-origin:left 0;-webkit-text-stroke:0.15px #111;">R$</div>
<div class="t" style="left:963.5999999999999px;top:677.58px;font-family:'Liberation Sans';font-size:12px;color:#111;font-weight:normal;-webkit-text-stroke:0.15px #111;">-</div>
<div class="t" style="left:995.1px;top:677.58px;font-family:'Liberation Sans';font-size:12px;color:#111;font-weight:normal;transform:scaleX(0.88);transform-origin:left 0;-webkit-text-stroke:0.15px #111;">R$</div>
<div class="t" style="left:1054.4px;top:677.58px;font-family:'Liberation Sans';font-size:12px;color:#111;font-weight:normal;-webkit-text-stroke:0.15px #111;">-</div>
<div class="t" style="left:1085.9px;top:677.58px;font-family:'Liberation Sans';font-size:12px;color:#111;font-weight:normal;transform:scaleX(0.88);transform-origin:left 0;-webkit-text-stroke:0.15px #111;">R$</div>
<div class="t" style="left:1145.2px;top:677.58px;font-family:'Liberation Sans';font-size:12px;color:#111;font-weight:normal;-webkit-text-stroke:0.15px #111;">-</div>
<div class="t" style="left:1176.6999999999998px;top:677.58px;font-family:'Liberation Sans';font-size:12px;color:#111;font-weight:normal;transform:scaleX(0.88);transform-origin:left 0;-webkit-text-stroke:0.15px #111;">R$</div>
<div class="t" style="left:1235.9999999999998px;top:677.58px;font-family:'Liberation Sans';font-size:12px;color:#111;font-weight:normal;-webkit-text-stroke:0.15px #111;">-</div>
<div class="t" style="left:1267.5px;top:677.58px;font-family:'Liberation Sans';font-size:12px;color:#111;font-weight:normal;transform:scaleX(0.88);transform-origin:left 0;-webkit-text-stroke:0.15px #111;">R$</div>
<div class="t" style="left:1326.8px;top:677.58px;font-family:'Liberation Sans';font-size:12px;color:#111;font-weight:normal;-webkit-text-stroke:0.15px #111;">-</div>
<div class="t" style="left:1358.3px;top:677.58px;font-family:'Liberation Sans';font-size:12px;color:#111;font-weight:normal;transform:scaleX(0.88);transform-origin:left 0;-webkit-text-stroke:0.15px #111;">R$</div>
<div class="t" style="left:1417.6px;top:677.58px;font-family:'Liberation Sans';font-size:12px;color:#111;font-weight:normal;-webkit-text-stroke:0.15px #111;">-</div>
<div class="t" style="left:1449.1px;top:677.58px;font-family:'Liberation Sans';font-size:12px;color:#111;font-weight:normal;transform:scaleX(0.88);transform-origin:left 0;-webkit-text-stroke:0.15px #111;">R$</div>
<div class="t" style="right:73.10000000000014px;top:677.58px;font-family:'Liberation Sans';font-size:12px;color:#111;font-weight:normal;transform:scaleX(0.94);transform-origin:right 0;-webkit-text-stroke:0.15px #111;">0,00</div>
<div class="t" style="left:137.5px;top:719.25px;font-family:'Liberation Sans';font-size:12px;color:#111;font-weight:normal;transform:scaleX(1.0);transform-origin:left 0;-webkit-text-stroke:0.15px #111;">Ford Ka 1.0 - XCD8734</div>
<div class="t" style="left:359.5px;top:719.25px;font-family:'Liberation Sans';font-size:12px;color:#111;font-weight:normal;transform:scaleX(0.88);transform-origin:left 0;-webkit-text-stroke:0.15px #111;">R$</div>
<div class="t" style="left:418.8px;top:719.25px;font-family:'Liberation Sans';font-size:12px;color:#111;font-weight:normal;-webkit-text-stroke:0.15px #111;">-</div>
<div class="t" style="left:450.3px;top:719.25px;font-family:'Liberation Sans';font-size:12px;color:#111;font-weight:normal;transform:scaleX(0.88);transform-origin:left 0;-webkit-text-stroke:0.15px #111;">R$</div>
<div class="t" style="left:509.6px;top:719.25px;font-family:'Liberation Sans';font-size:12px;color:#111;font-weight:normal;-webkit-text-stroke:0.15px #111;">-</div>
<div class="t" style="left:541.1px;top:719.25px;font-family:'Liberation Sans';font-size:12px;color:#111;font-weight:normal;transform:scaleX(0.88);transform-origin:left 0;-webkit-text-stroke:0.15px #111;">R$</div>
<div class="t" style="left:600.4px;top:719.25px;font-family:'Liberation Sans';font-size:12px;color:#111;font-weight:normal;-webkit-text-stroke:0.15px #111;">-</div>
<div class="t" style="left:631.9px;top:719.25px;font-family:'Liberation Sans';font-size:12px;color:#111;font-weight:normal;transform:scaleX(0.88);transform-origin:left 0;-webkit-text-stroke:0.15px #111;">R$</div>
<div class="t" style="left:691.1999999999999px;top:719.25px;font-family:'Liberation Sans';font-size:12px;color:#111;font-weight:normal;-webkit-text-stroke:0.15px #111;">-</div>
<div class="t" style="left:722.7px;top:719.25px;font-family:'Liberation Sans';font-size:12px;color:#111;font-weight:normal;transform:scaleX(0.88);transform-origin:left 0;-webkit-text-stroke:0.15px #111;">R$</div>
<div class="t" style="left:782.0px;top:719.25px;font-family:'Liberation Sans';font-size:12px;color:#111;font-weight:normal;-webkit-text-stroke:0.15px #111;">-</div>
<div class="t" style="left:813.5px;top:719.25px;font-family:'Liberation Sans';font-size:12px;color:#111;font-weight:normal;transform:scaleX(0.88);transform-origin:left 0;-webkit-text-stroke:0.15px #111;">R$</div>
<div class="t" style="left:872.8px;top:719.25px;font-family:'Liberation Sans';font-size:12px;color:#111;font-weight:normal;-webkit-text-stroke:0.15px #111;">-</div>
<div class="t" style="left:904.3px;top:719.25px;font-family:'Liberation Sans';font-size:12px;color:#111;font-weight:normal;transform:scaleX(0.88);transform-origin:left 0;-webkit-text-stroke:0.15px #111;">R$</div>
<div class="t" style="left:963.5999999999999px;top:719.25px;font-family:'Liberation Sans';font-size:12px;color:#111;font-weight:normal;-webkit-text-stroke:0.15px #111;">-</div>
<div class="t" style="left:995.1px;top:719.25px;font-family:'Liberation Sans';font-size:12px;color:#111;font-weight:normal;transform:scaleX(0.88);transform-origin:left 0;-webkit-text-stroke:0.15px #111;">R$</div>
<div class="t" style="left:1054.4px;top:719.25px;font-family:'Liberation Sans';font-size:12px;color:#111;font-weight:normal;-webkit-text-stroke:0.15px #111;">-</div>
<div class="t" style="left:1085.9px;top:719.25px;font-family:'Liberation Sans';font-size:12px;color:#111;font-weight:normal;transform:scaleX(0.88);transform-origin:left 0;-webkit-text-stroke:0.15px #111;">R$</div>
<div class="t" style="left:1145.2px;top:719.25px;font-family:'Liberation Sans';font-size:12px;color:#111;font-weight:normal;-webkit-text-stroke:0.15px #111;">-</div>
<div class="t" style="left:1176.6999999999998px;top:719.25px;font-family:'Liberation Sans';font-size:12px;color:#111;font-weight:normal;transform:scaleX(0.88);transform-origin:left 0;-webkit-text-stroke:0.15px #111;">R$</div>
<div class="t" style="left:1235.9999999999998px;top:719.25px;font-family:'Liberation Sans';font-size:12px;color:#111;font-weight:normal;-webkit-text-stroke:0.15px #111;">-</div>
<div class="t" style="left:1267.5px;top:719.25px;font-family:'Liberation Sans';font-size:12px;color:#111;font-weight:normal;transform:scaleX(0.88);transform-origin:left 0;-webkit-text-stroke:0.15px #111;">R$</div>
<div class="t" style="left:1326.8px;top:719.25px;font-family:'Liberation Sans';font-size:12px;color:#111;font-weight:normal;-webkit-text-stroke:0.15px #111;">-</div>
<div class="t" style="left:1358.3px;top:719.25px;font-family:'Liberation Sans';font-size:12px;color:#111;font-weight:normal;transform:scaleX(0.88);transform-origin:left 0;-webkit-text-stroke:0.15px #111;">R$</div>
<div class="t" style="left:1417.6px;top:719.25px;font-family:'Liberation Sans';font-size:12px;color:#111;font-weight:normal;-webkit-text-stroke:0.15px #111;">-</div>
<div class="t" style="left:1449.1px;top:719.25px;font-family:'Liberation Sans';font-size:12px;color:#111;font-weight:normal;transform:scaleX(0.88);transform-origin:left 0;-webkit-text-stroke:0.15px #111;">R$</div>
<div class="t" style="right:73.10000000000014px;top:719.25px;font-family:'Liberation Sans';font-size:12px;color:#111;font-weight:normal;transform:scaleX(0.94);transform-origin:right 0;-webkit-text-stroke:0.15px #111;">0,00</div>
<div class="t" style="left:137.5px;top:760.92px;font-family:'Liberation Sans';font-size:12px;color:#111;font-weight:normal;transform:scaleX(1.0);transform-origin:left 0;-webkit-text-stroke:0.15px #111;">Nissan Kicks 1.6 - YHJ2093</div>
<div class="t" style="left:359.5px;top:760.92px;font-family:'Liberation Sans';font-size:12px;color:#111;font-weight:normal;transform:scaleX(0.88);transform-origin:left 0;-webkit-text-stroke:0.15px #111;">R$</div>
<div class="t" style="left:418.8px;top:760.92px;font-family:'Liberation Sans';font-size:12px;color:#111;font-weight:normal;-webkit-text-stroke:0.15px #111;">-</div>
<div class="t" style="left:450.3px;top:760.92px;font-family:'Liberation Sans';font-size:12px;color:#111;font-weight:normal;transform:scaleX(0.88);transform-origin:left 0;-webkit-text-stroke:0.15px #111;">R$</div>
<div class="t" style="left:509.6px;top:760.92px;font-family:'Liberation Sans';font-size:12px;color:#111;font-weight:normal;-webkit-text-stroke:0.15px #111;">-</div>
<div class="t" style="left:541.1px;top:760.92px;font-family:'Liberation Sans';font-size:12px;color:#111;font-weight:normal;transform:scaleX(0.88);transform-origin:left 0;-webkit-text-stroke:0.15px #111;">R$</div>
<div class="t" style="left:600.4px;top:760.92px;font-family:'Liberation Sans';font-size:12px;color:#111;font-weight:normal;-webkit-text-stroke:0.15px #111;">-</div>
<div class="t" style="left:631.9px;top:760.92px;font-family:'Liberation Sans';font-size:12px;color:#111;font-weight:normal;transform:scaleX(0.88);transform-origin:left 0;-webkit-text-stroke:0.15px #111;">R$</div>
<div class="t" style="left:691.1999999999999px;top:760.92px;font-family:'Liberation Sans';font-size:12px;color:#111;font-weight:normal;-webkit-text-stroke:0.15px #111;">-</div>
<div class="t" style="left:722.7px;top:760.92px;font-family:'Liberation Sans';font-size:12px;color:#111;font-weight:normal;transform:scaleX(0.88);transform-origin:left 0;-webkit-text-stroke:0.15px #111;">R$</div>
<div class="t" style="left:782.0px;top:760.92px;font-family:'Liberation Sans';font-size:12px;color:#111;font-weight:normal;-webkit-text-stroke:0.15px #111;">-</div>
<div class="t" style="left:813.5px;top:760.92px;font-family:'Liberation Sans';font-size:12px;color:#111;font-weight:normal;transform:scaleX(0.88);transform-origin:left 0;-webkit-text-stroke:0.15px #111;">R$</div>
<div class="t" style="left:872.8px;top:760.92px;font-family:'Liberation Sans';font-size:12px;color:#111;font-weight:normal;-webkit-text-stroke:0.15px #111;">-</div>
<div class="t" style="left:904.3px;top:760.92px;font-family:'Liberation Sans';font-size:12px;color:#111;font-weight:normal;transform:scaleX(0.88);transform-origin:left 0;-webkit-text-stroke:0.15px #111;">R$</div>
<div class="t" style="left:963.5999999999999px;top:760.92px;font-family:'Liberation Sans';font-size:12px;color:#111;font-weight:normal;-webkit-text-stroke:0.15px #111;">-</div>
<div class="t" style="left:995.1px;top:760.92px;font-family:'Liberation Sans';font-size:12px;color:#111;font-weight:normal;transform:scaleX(0.88);transform-origin:left 0;-webkit-text-stroke:0.15px #111;">R$</div>
<div class="t" style="left:1054.4px;top:760.92px;font-family:'Liberation Sans';font-size:12px;color:#111;font-weight:normal;-webkit-text-stroke:0.15px #111;">-</div>
<div class="t" style="left:1085.9px;top:760.92px;font-family:'Liberation Sans';font-size:12px;color:#111;font-weight:normal;transform:scaleX(0.88);transform-origin:left 0;-webkit-text-stroke:0.15px #111;">R$</div>
<div class="t" style="left:1145.2px;top:760.92px;font-family:'Liberation Sans';font-size:12px;color:#111;font-weight:normal;-webkit-text-stroke:0.15px #111;">-</div>
<div class="t" style="left:1176.6999999999998px;top:760.92px;font-family:'Liberation Sans';font-size:12px;color:#111;font-weight:normal;transform:scaleX(0.88);transform-origin:left 0;-webkit-text-stroke:0.15px #111;">R$</div>
<div class="t" style="left:1235.9999999999998px;top:760.92px;font-family:'Liberation Sans';font-size:12px;color:#111;font-weight:normal;-webkit-text-stroke:0.15px #111;">-</div>
<div class="t" style="left:1267.5px;top:760.92px;font-family:'Liberation Sans';font-size:12px;color:#111;font-weight:normal;transform:scaleX(0.88);transform-origin:left 0;-webkit-text-stroke:0.15px #111;">R$</div>
<div class="t" style="left:1326.8px;top:760.92px;font-family:'Liberation Sans';font-size:12px;color:#111;font-weight:normal;-webkit-text-stroke:0.15px #111;">-</div>
<div class="t" style="left:1358.3px;top:760.92px;font-family:'Liberation Sans';font-size:12px;color:#111;font-weight:normal;transform:scaleX(0.88);transform-origin:left 0;-webkit-text-stroke:0.15px #111;">R$</div>
<div class="t" style="left:1417.6px;top:760.92px;font-family:'Liberation Sans';font-size:12px;color:#111;font-weight:normal;-webkit-text-stroke:0.15px #111;">-</div>
<div class="t" style="left:1449.1px;top:760.92px;font-family:'Liberation Sans';font-size:12px;color:#111;font-weight:normal;transform:scaleX(0.88);transform-origin:left 0;-webkit-text-stroke:0.15px #111;">R$</div>
<div class="t" style="right:73.10000000000014px;top:760.92px;font-family:'Liberation Sans';font-size:12px;color:#111;font-weight:normal;transform:scaleX(0.94);transform-origin:right 0;-webkit-text-stroke:0.15px #111;">0,00</div>
<div class="r" style="left:806.0px;top:536.6800000000001px;width:92.29999999999995px;height:43.16999999999996px;background:transparent;border:2px solid #3c6bd1"></div>
<div class="r" style="left:893.5999999999999px;top:575.65px;width:8.5px;height:8.5px;background:#1a5fd0;border-radius:50%;border:1px solid #fff"></div>
<div class="r" style="left:1589.5px;top:224px;width:10.5px;height:580px;background:#ffffff;"></div>
<div class="r" style="left:1589px;top:224px;width:1px;height:580px;background:#e0e0e0;"></div>
<div class="r" style="left:1591px;top:373px;width:7px;height:23px;background:#dadce0;border-radius:4px"></div>
<div class="r" style="left:0px;top:804px;width:1600px;height:12px;background:#ffffff;"></div>
<div class="r" style="left:0px;top:804px;width:1600px;height:1px;background:#e0e0e0;"></div>
<div class="r" style="left:0px;top:805px;width:42px;height:11px;background:#f8f9fa;"></div>
<div class="r" style="left:42px;top:804px;width:1px;height:12px;background:#c7c7c7;"></div>
<div class="r" style="left:45px;top:806px;width:970px;height:8px;background:#dadce0;border-radius:4px"></div>
<div class="r" style="left:1561px;top:805px;width:16px;height:10px;background:#ffffff;border-left:1px solid #e0e0e0"></div>
<svg class="r" style="left:1565px;top:807px;" width="5" height="6" viewBox="0 0 5 6"><path d="M4 0.5 L1 3 L4 5.5 Z" fill="#777"/></svg>
<svg class="r" style="left:1580px;top:807px;" width="5" height="6" viewBox="0 0 5 6"><path d="M1 0.5 L4 3 L1 5.5 Z" fill="#777"/></svg>
<div class="r" style="left:1589px;top:804px;width:1px;height:12px;background:#e0e0e0;"></div>
<div class="r" style="left:1590px;top:775px;width:10px;height:1px;background:#e3e3e3;"></div>
<div class="r" style="left:1590px;top:790px;width:10px;height:1px;background:#e3e3e3;"></div>
<svg class="r" style="left:1592px;top:779px;" width="7" height="6" viewBox="0 0 7 6"><path d="M0.8 4.5 L3.5 1.5 L6.2 4.5 Z" fill="#888"/></svg>
<svg class="r" style="left:1592px;top:795px;" width="7" height="6" viewBox="0 0 7 6"><path d="M0.8 1.2 L3.5 4.2 L6.2 1.2 Z" fill="#888"/></svg>
<div class="r" style="left:0px;top:816px;width:1600px;height:34px;background:#f9fbfd;"></div>
<div class="r" style="left:0px;top:816px;width:1600px;height:1px;background:#e8eaed;"></div>
<svg class="r" style="left:50px;top:827px;" width="15" height="15" viewBox="0 0 15 15"><path d="M7.5 1.5 V13.5 M1.5 7.5 H13.5" stroke="#444746" stroke-width="1.8"/></svg>
<svg class="r" style="left:87px;top:828px;" width="15" height="13" viewBox="0 0 15 13"><path d="M1 2 H14 M1 6.5 H14 M1 11 H14" stroke="#444746" stroke-width="1.8"/></svg>
<div class="r" style="left:117px;top:822px;width:1px;height:22px;background:#c7c7c7;"></div>
<div class="r" style="left:640.6px;top:817px;width:105.4px;height:33px;background:#e1e9f7;"></div>
<div class="t" style="left:138.75px;top:826.92px;font-family:'Liberation Sans';font-size:13.9px;color:#444746;font-weight:normal;transform:scaleX(0.97);transform-origin:left 0;">Mai</div>
<svg class="r" style="left:170.8px;top:833px;" width="9" height="5" viewBox="0 0 9 5"><path d="M0.5 0.5 H8.5 L4.5 4.5 Z" fill="#444746"/></svg>
<div class="t" style="left:202.8px;top:826.92px;font-family:'Liberation Sans';font-size:13.9px;color:#444746;font-weight:normal;transform:scaleX(0.97);transform-origin:left 0;">Jun</div>
<svg class="r" style="left:235.5px;top:833px;" width="9" height="5" viewBox="0 0 9 5"><path d="M0.5 0.5 H8.5 L4.5 4.5 Z" fill="#444746"/></svg>
<div class="t" style="left:267.5px;top:826.92px;font-family:'Liberation Sans';font-size:13.9px;color:#444746;font-weight:normal;transform:scaleX(0.97);transform-origin:left 0;">Jul</div>
<svg class="r" style="left:295.8px;top:833px;" width="9" height="5" viewBox="0 0 9 5"><path d="M0.5 0.5 H8.5 L4.5 4.5 Z" fill="#444746"/></svg>
<div class="t" style="left:327.5px;top:826.92px;font-family:'Liberation Sans';font-size:13.9px;color:#444746;font-weight:normal;transform:scaleX(0.97);transform-origin:left 0;">Ago</div>
<svg class="r" style="left:362.1px;top:833px;" width="9" height="5" viewBox="0 0 9 5"><path d="M0.5 0.5 H8.5 L4.5 4.5 Z" fill="#444746"/></svg>
<div class="t" style="left:394px;top:826.92px;font-family:'Liberation Sans';font-size:13.9px;color:#444746;font-weight:normal;transform:scaleX(0.97);transform-origin:left 0;">Set</div>
<svg class="r" style="left:424.5px;top:833px;" width="9" height="5" viewBox="0 0 9 5"><path d="M0.5 0.5 H8.5 L4.5 4.5 Z" fill="#444746"/></svg>
<div class="t" style="left:456.6px;top:826.92px;font-family:'Liberation Sans';font-size:13.9px;color:#444746;font-weight:normal;transform:scaleX(0.97);transform-origin:left 0;">Out</div>
<svg class="r" style="left:489.5px;top:833px;" width="9" height="5" viewBox="0 0 9 5"><path d="M0.5 0.5 H8.5 L4.5 4.5 Z" fill="#444746"/></svg>
<div class="t" style="left:521px;top:826.92px;font-family:'Liberation Sans';font-size:13.9px;color:#444746;font-weight:normal;transform:scaleX(0.97);transform-origin:left 0;">Nov</div>
<svg class="r" style="left:555.5px;top:833px;" width="9" height="5" viewBox="0 0 9 5"><path d="M0.5 0.5 H8.5 L4.5 4.5 Z" fill="#444746"/></svg>
<div class="t" style="left:587.5px;top:826.92px;font-family:'Liberation Sans';font-size:13.9px;color:#444746;font-weight:normal;transform:scaleX(0.97);transform-origin:left 0;">Dez</div>
<svg class="r" style="left:621.1px;top:833px;" width="9" height="5" viewBox="0 0 9 5"><path d="M0.5 0.5 H8.5 L4.5 4.5 Z" fill="#444746"/></svg>
<div class="t" style="left:652px;top:826.92px;font-family:'Liberation Sans';font-size:13.9px;color:#0b57d0;font-weight:normal;transform:scaleX(0.97);transform-origin:left 0;-webkit-text-stroke:0.4px #0b57d0">Rel_Equip</div>
<svg class="r" style="left:726.5px;top:833px;" width="9" height="5" viewBox="0 0 9 5"><path d="M0.5 0.5 H8.5 L4.5 4.5 Z" fill="#0b57d0"/></svg>
<div class="t" style="left:757.8px;top:826.92px;font-family:'Liberation Sans';font-size:13.9px;color:#444746;font-weight:normal;transform:scaleX(0.97);transform-origin:left 0;">Rel_Desp</div>
<svg class="r" style="left:826.5px;top:833px;" width="9" height="5" viewBox="0 0 9 5"><path d="M0.5 0.5 H8.5 L4.5 4.5 Z" fill="#444746"/></svg>
<div class="t" style="left:858.75px;top:826.92px;font-family:'Liberation Sans';font-size:13.9px;color:#444746;font-weight:normal;transform:scaleX(0.97);transform-origin:left 0;">Rel_FC</div>
<svg class="r" style="left:912.5px;top:833px;" width="9" height="5" viewBox="0 0 9 5"><path d="M0.5 0.5 H8.5 L4.5 4.5 Z" fill="#444746"/></svg>
<div class="t" style="left:944px;top:826.92px;font-family:'Liberation Sans';font-size:13.9px;color:#444746;font-weight:normal;transform:scaleX(0.97);transform-origin:left 0;">Rel_Cli</div>
<svg class="r" style="left:996.5px;top:833px;" width="9" height="5" viewBox="0 0 9 5"><path d="M0.5 0.5 H8.5 L4.5 4.5 Z" fill="#444746"/></svg>
<div class="t" style="left:1028px;top:826.92px;font-family:'Liberation Sans';font-size:13.9px;color:#444746;font-weight:normal;transform:scaleX(0.97);transform-origin:left 0;">An_Equip</div>
<svg class="r" style="left:1098.5px;top:833px;" width="9" height="5" viewBox="0 0 9 5"><path d="M0.5 0.5 H8.5 L4.5 4.5 Z" fill="#444746"/></svg>
<div class="t" style="left:1130px;top:826.92px;font-family:'Liberation Sans';font-size:13.9px;color:#444746;font-weight:normal;transform:scaleX(0.97);transform-origin:left 0;">Dash</div>
<svg class="r" style="left:1171.5px;top:833px;" width="9" height="5" viewBox="0 0 9 5"><path d="M0.5 0.5 H8.5 L4.5 4.5 Z" fill="#444746"/></svg>
<div class="t" style="left:1203.6px;top:826.92px;font-family:'Liberation Sans';font-size:13.9px;color:#444746;font-weight:normal;transform:scaleX(0.97);transform-origin:left 0;">Ini</div>
<svg class="r" style="left:1228.5px;top:833px;" width="9" height="5" viewBox="0 0 9 5"><path d="M0.5 0.5 H8.5 L4.5 4.5 Z" fill="#444746"/></svg>
<div class="t" style="left:1260.6px;top:826.92px;font-family:'Liberation Sans';font-size:13.9px;color:#444746;font-weight:normal;transform:scaleX(0.97);transform-origin:left 0;">Duv</div>
<svg class="r" style="left:1294.5px;top:833px;" width="9" height="5" viewBox="0 0 9 5"><path d="M0.5 0.5 H8.5 L4.5 4.5 Z" fill="#444746"/></svg>
<div class="t" style="left:1326px;top:826.92px;font-family:'Liberation Sans';font-size:13.9px;color:#444746;font-weight:normal;transform:scaleX(0.97);transform-origin:left 0;">Sug</div>
<svg class="r" style="left:1360.0px;top:833px;" width="9" height="5" viewBox="0 0 9 5"><path d="M0.5 0.5 H8.5 L4.5 4.5 Z" fill="#444746"/></svg>
<svg class="r" style="left:1399px;top:827px;" width="10" height="14" viewBox="0 0 10 14"><path d="M6.8 3 L2.8 7 L6.8 11" stroke="#444746" stroke-width="1.7" fill="none"/></svg>
<svg class="r" style="left:1436px;top:827px;" width="10" height="14" viewBox="0 0 10 14"><path d="M3 3 L7 7 L3 11" stroke="#b0b3b6" stroke-width="1.5" fill="none"/></svg>
<svg class="r" style="left:1569px;top:829px;" width="10" height="14" viewBox="0 0 10 14"><path d="M6.8 3 L2.8 7 L6.8 11" stroke="#444746" stroke-width="1.7" fill="none"/></svg>
</body></html>
